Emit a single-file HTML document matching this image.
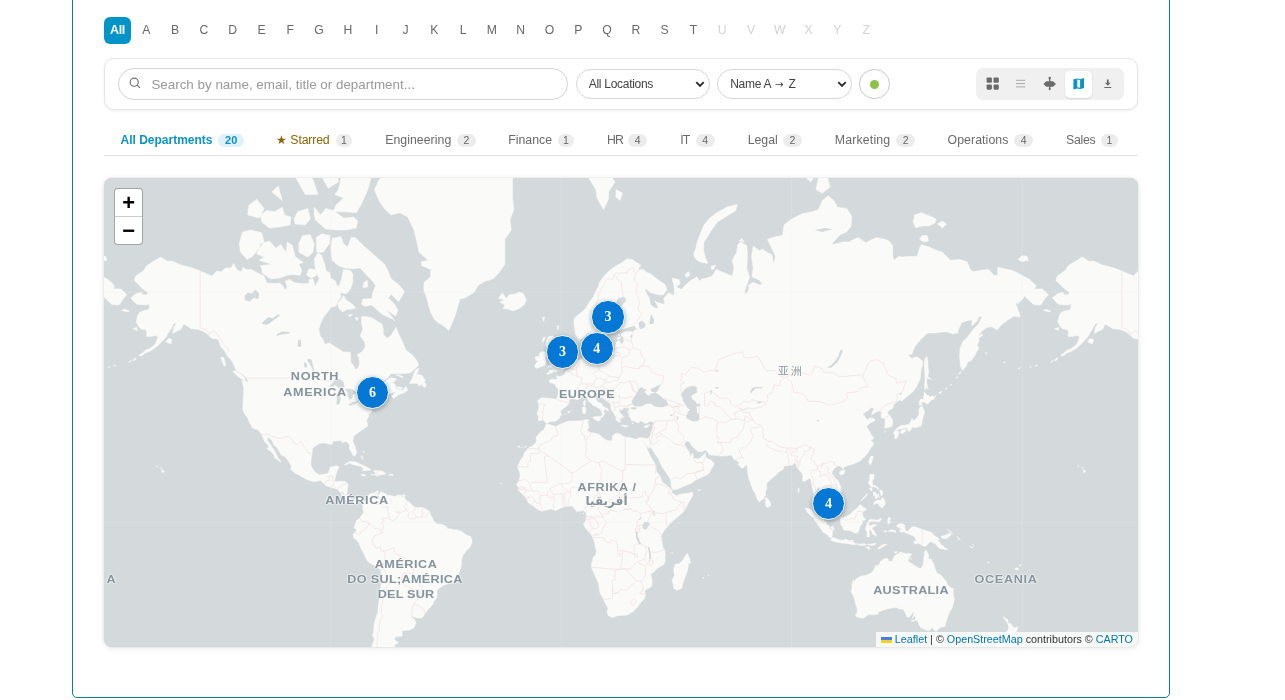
<!DOCTYPE html>
<html lang="en">
<head>
<meta charset="utf-8">
<title>Directory – Map</title>
<style>
*{box-sizing:border-box;margin:0;padding:0}
html,body{width:1285px;height:700px;overflow:hidden;background:#fff}
body{will-change:transform;font-family:"Liberation Sans",sans-serif;color:#444;position:relative}
.frame{position:absolute;left:72px;top:-40px;width:1098px;height:738px;border:1px solid #0e8088;border-radius:5px;background:#fff}
.alpha{position:absolute;left:104px;top:17px;height:27px;display:flex;gap:1.8px}
.alpha span{display:block;width:27px;height:27px;line-height:26px;text-align:center;font-size:12.2px;color:#686868;border-radius:6px}
.alpha span.on{background:#0294c8;color:#fff;font-weight:700;letter-spacing:-.4px;font-size:12.5px}
.alpha span.off{color:#d2d2d2}
.toolbar{position:absolute;left:104px;top:58px;width:1034px;height:52px;border:1px solid #e6e6e6;border-radius:10px;background:#fff;box-shadow:0 1px 3px rgba(0,0,0,.07)}
.search{position:absolute;left:118px;top:68px;width:450px;height:31.500px;border:1px solid #d4d4d4;border-radius:16px;background:#fff}
.search svg{position:absolute;left:9.500px;top:8.300px}
.search b{position:absolute;left:32.400px;top:0;line-height:31.600px;font-weight:400;font-size:13.4px;color:#9a9a9a;white-space:nowrap}
.sel{position:absolute;top:69px;height:29.500px;border:1px solid #d8d8d8;border-radius:15px;background:#fff;font-family:"Liberation Sans",sans-serif;font-size:12px;letter-spacing:-.28px;color:#444;line-height:29.600px;padding-left:12.200px;white-space:nowrap}
.sel svg{position:absolute;right:2.800px;top:7.500px}
.dotbtn{position:absolute;left:859px;top:69px;width:31px;height:29.500px;border:1px solid #c9c9c9;border-radius:15px;background:#fff}
.dotbtn i{position:absolute;left:10px;top:9.700px;width:9.300px;height:9.300px;border-radius:50%;background:#8bc34a}
.views{position:absolute;left:976px;top:68px;width:148px;height:32px;border-radius:7px;background:#f0f0f0}
.views .act{position:absolute;left:89px;top:3.200px;width:26.600px;height:26.600px;border-radius:5px;background:#fff;box-shadow:0 1px 2px rgba(0,0,0,.12)}
.views svg{position:absolute;top:0;left:0}
.tabs{position:absolute;left:104px;top:124px;width:1034px;height:32px;border-bottom:1px solid #e4e4e4}
.tabs a{position:absolute;top:0;height:31px;line-height:32px;font-size:12.3px;color:#6a6a6a;white-space:nowrap;text-decoration:none}
.tabs em{position:absolute;top:9.500px;height:13.200px;line-height:13.200px;border-radius:7px;background:#ececec;color:#666;font-style:normal;font-size:10.500px;text-align:center}
.tabs a.on{color:#0b93c6;font-weight:700;font-size:12px}
.tabs em.on{background:#dff1fb;color:#0b93c6;font-weight:700;font-size:11px}
.tabs a.star{color:#8a6500}
.map{position:absolute;left:104px;top:178px;width:1034px;height:469px;border-radius:8px;overflow:hidden;background:#d4dadc;box-shadow:0 1px 6px rgba(0,0,0,.10),0 0 0 1px rgba(0,0,0,.03)}
.map svg.world{position:absolute;left:0;top:0}
.zoom{position:absolute;left:10.300px;top:10.100px;width:28.900px;height:56.800px;border:1.200px solid rgba(0,0,0,.24);border-radius:4px;background:#fff;background-clip:padding-box;overflow:hidden}
.zoom span{display:block;height:27.400px;text-align:center;font:700 22px/27.800px "Liberation Sans",sans-serif;color:#000}
.zoom span+span{border-top:1px solid #ccc;height:27.400px;line-height:27.400px}
.attr{position:absolute;right:0;bottom:0;height:15.200px;line-height:15px;padding:0 5px 0 5px;background:rgba(255,255,255,.8);font-size:10.750px;color:#333;white-space:nowrap}
.attr a{color:#0078a8;text-decoration:none}
.attr svg{display:inline-block;vertical-align:-.5px;margin-right:3.200px}
.mk{position:absolute;width:33.400px;height:33.400px;margin:-16.700px 0 0 -16.700px;border-radius:50%;background:#0478d4;border:1.200px solid #fff;box-shadow:0 1.500px 4px rgba(0,0,0,.32);color:#fff;font:700 14px/32.400px "Liberation Serif",serif;text-align:center}
.lbl{position:absolute;font:700 11.2px/14px "Liberation Sans","DejaVu Sans","Noto Sans CJK SC",sans-serif;color:#85949f;text-align:center;white-space:nowrap;transform:translate(-50%,-50%) scaleX(1.13);text-shadow:0 0 1.5px #fafaf8,0 0 1.5px #fafaf8,0 0 2px #fafaf8}
.lbl.cjk{font-weight:400;font-size:11px;letter-spacing:2px;margin-left:1px;color:#8e99a1;transform:translate(-50%,-50%)}
.lbl.ar{font-family:"DejaVu Sans","Liberation Sans",sans-serif;letter-spacing:0;font-size:12px;transform:translate(-50%,-50%)}
</style>
</head>
<body>
<div class="frame"></div>
<div class="alpha"><span class="on">All</span><span>A</span><span>B</span><span>C</span><span>D</span><span>E</span><span>F</span><span>G</span><span>H</span><span>I</span><span>J</span><span>K</span><span>L</span><span>M</span><span>N</span><span>O</span><span>P</span><span>Q</span><span>R</span><span>S</span><span>T</span><span class="off">U</span><span class="off">V</span><span class="off">W</span><span class="off">X</span><span class="off">Y</span><span class="off">Z</span></div>
<div class="toolbar"></div>
<div class="search"><svg width="12" height="12" viewBox="0 0 12 12" fill="none" stroke="#6e6e6e" stroke-width="1.15"><circle cx="5.2" cy="5.2" r="4.05"/><path d="M8.2 8.2l2.7 2.7"/></svg><b>Search by name, email, title or department...</b></div>
<div class="sel" style="left:575.500px;width:134.500px">All Locations<svg width="12" height="12" viewBox="0 0 12 12" fill="none" stroke="#2a2a2a" stroke-width="1.9"><path d="M2.300 4.200l3.700 3.700 3.700-3.700"/></svg></div>
<div class="sel" style="left:717px;width:135px">Name A <span style="font-family:'DejaVu Sans',sans-serif;font-size:10.500px;letter-spacing:0;position:relative;top:-.5px;margin:0 1.5px">→</span> Z<svg width="12" height="12" viewBox="0 0 12 12" fill="none" stroke="#2a2a2a" stroke-width="1.9"><path d="M2.300 4.200l3.700 3.700 3.700-3.700"/></svg></div>
<div class="dotbtn"><i></i></div>
<div class="views"><div class="act"></div>
<svg width="148" height="32" viewBox="0 0 148 32">
<g fill="#6b6b6b"><rect x="10.600" y="9.500" width="5.300" height="5.300" rx="1.100"/><rect x="17.500" y="9.500" width="5.300" height="5.300" rx="1.100"/><rect x="10.600" y="16.400" width="5.300" height="5.300" rx="1.100"/><rect x="17.500" y="16.400" width="5.300" height="5.300" rx="1.100"/></g>
<g stroke="#a9a9a9" stroke-width="1"><path d="M40 12.300h9.200M40 15.600h9.200M40 18.900h9.200"/></g>
<g fill="#6b6b6b"><path d="M67.400 15.900l3-2.700h6.600l3 2.700-3 2.800h-6.600z"/><rect x="73" y="10.500" width="1.400" height="11" /><circle cx="73.700" cy="9.900" r="1.200"/><path d="M72.300 20.500h2.800l-1.400 2.100z"/></g>
<g><path fill="#0b93c6" d="M97.400 11.600l3.800-1 3.200.6 3.600-1.100v9.800l-3.600 1.100-3.200-.6-3.800 1z"/><path fill="#fff" d="M101.300 11.600l2.800.5v7.600l-2.800-.5z"/></g>
<g fill="#6b6b6b"><path d="M130.900 11.500h1.800v3.200h2l-2.900 3.100-2.900-3.100h2zM128.300 18.900h7v1.100h-7z"/></g>
</svg></div>
<div class="tabs">
<a class="on" style="left:16.5px;letter-spacing:0.00px">All Departments</a><em class="on" style="left:114.3px;width:25.7px">20</em>
<a class="star" style="left:172.3px;letter-spacing:-0.17px">★ Starred</a><em class="star" style="left:232.2px;width:15.6px">1</em>
<a class="" style="left:281.2px;letter-spacing:0.04px">Engineering</a><em class="" style="left:353.0px;width:18.8px">2</em>
<a class="" style="left:404.2px;letter-spacing:0.02px">Finance</a><em class="" style="left:453.8px;width:16.2px">1</em>
<a class="" style="left:503.1px;letter-spacing:-0.90px">HR</a><em class="" style="left:523.9px;width:19.6px">4</em>
<a class="" style="left:576.3px;letter-spacing:-0.90px">IT</a><em class="" style="left:591.7px;width:19.2px">4</em>
<a class="" style="left:643.7px;letter-spacing:-0.02px">Legal</a><em class="" style="left:679.1px;width:18.8px">2</em>
<a class="" style="left:730.8px;letter-spacing:0.17px">Marketing</a><em class="" style="left:792.3px;width:18.6px">2</em>
<a class="" style="left:843.5px;letter-spacing:0.08px">Operations</a><em class="" style="left:910.1px;width:19.0px">4</em>
<a class="" style="left:962.0px;letter-spacing:-0.27px">Sales</a><em class="" style="left:997.2px;width:16.6px">1</em>
</div>
<div class="map">
<svg class="world" width="1034" height="469" viewBox="0 0 1034 469"><rect width="1034" height="469" fill="#d4dadc"/><path fill="#fafaf8" stroke="#fafaf8" stroke-width=".45" stroke-linejoin="round" d="M26.9,119.9L31.5,116.1L37.4,114.2L38.1,116.7L43.0,116.7L43.8,114.2L38.1,110.3L30.2,102.2L31.7,98.0L39.9,92.2L42.7,87.7L48.9,83.8L56.6,79.1L63.0,83.1L68.1,83.1L77.0,86.9L88.6,90.0L96.2,92.9L102.6,95.8L107.8,98.0L112.9,92.9L116.7,93.7L121.8,90.0L127.0,90.0L129.5,85.4L133.4,92.2L137.2,93.7L139.0,89.2L142.3,91.4L147.4,91.4L155.1,95.8L160.2,98.0L162.8,104.9L170.5,105.6L175.6,104.9L179.4,108.3L180.7,112.2L183.3,109.0L181.2,102.9L185.8,101.5L189.7,104.3L196.1,105.6L201.2,105.6L205.0,105.6L205.0,101.5L208.9,100.8L211.4,108.3L213.2,104.3L215.3,100.8L212.7,95.1L210.7,87.7L210.4,80.7L214.0,75.0L217.3,76.7L220.4,85.4L222.4,92.9L225.5,94.4L226.8,100.1L231.2,102.9L233.2,108.3L235.8,107.0L237.8,99.4L239.6,91.4L246.0,92.2L248.8,95.8L248.8,104.3L246.5,110.9L242.9,115.5L239.6,115.5L236.3,114.2L237.0,119.2L233.7,123.5L232.4,127.7L226.8,129.5L224.8,132.4L221.7,136.3L218.4,141.3L216.6,145.6L214.8,151.3L216.0,157.4L219.6,162.2L220.7,166.0L225.5,165.1L230.6,168.4L234.5,170.7L239.6,173.9L246.5,174.3L246.8,183.9L249.8,188.1L251.1,191.4L254.2,190.2L255.5,186.0L255.0,179.6L253.2,177.0L258.8,173.0L261.4,168.4L260.6,163.7L256.2,157.9L258.8,151.3L257.5,146.1L257.5,138.6L262.6,138.6L267.8,139.7L272.9,142.9L278.0,146.1L279.3,151.3L279.3,156.4L283.1,160.3L287.0,157.4L290.0,152.4L292.1,149.3L295.4,157.4L299.2,165.1L301.8,172.0L307.4,176.1L310.5,179.6L313.8,183.9L314.6,187.3L311.3,190.6L306.2,195.1L298.5,195.5L287.2,195.5L284.4,199.0L280.6,202.5L277.2,206.3L275.4,208.6L278.8,205.6L283.1,201.8L287.0,199.8L292.6,201.0L290.0,204.1L287.5,204.1L291.3,206.7L291.8,210.5L294.4,211.9L298.7,212.3L301.8,208.2L303.9,211.9L301.0,214.5L294.6,216.7L289.5,220.6L287.7,218.1L292.1,214.1L288.2,214.5L285.7,215.9L280.6,218.8L277.5,220.2L276.0,224.4L278.0,226.5L274.2,227.9L269.0,229.2L267.8,230.6L267.8,233.6L265.5,236.2L263.9,234.6L264.9,237.6L263.7,240.5L262.6,242.4L263.4,245.9L263.9,248.1L261.4,249.7L257.8,252.2L255.0,254.0L252.7,255.8L249.8,258.0L248.8,263.0L250.1,266.3L251.1,268.3L252.4,273.5L252.1,276.1L251.1,277.8L249.3,277.8L247.8,275.2L246.8,273.0L245.2,270.4L245.5,266.9L243.4,264.2L241.6,263.6L238.8,264.8L236.5,262.7L234.0,262.7L231.9,263.0L228.6,263.0L228.3,266.3L225.5,266.3L223.0,265.4L219.1,264.8L214.5,266.0L210.9,268.3L208.4,270.4L208.1,275.8L207.1,281.2L206.8,285.9L208.1,290.0L211.2,294.4L214.0,296.0L215.5,297.1L220.4,296.0L223.0,296.0L225.5,292.5L225.8,289.5L227.6,288.7L231.9,287.8L234.2,288.1L235.0,289.2L233.2,292.8L231.9,296.3L231.4,299.0L230.4,303.3L233.2,303.5L237.0,303.3L240.9,303.5L244.2,305.7L243.4,310.9L242.9,314.9L243.2,316.4L244.7,318.8L246.8,321.4L249.8,321.9L252.4,320.8L253.7,319.8L256.2,320.3L258.8,322.1L260.6,324.0L259.1,324.2L257.8,326.0L256.5,323.2L253.7,321.4L252.4,323.4L252.4,325.2L250.1,326.0L248.0,324.0L245.0,323.4L242.9,322.7L240.4,319.8L239.3,319.8L237.6,318.2L237.8,315.9L235.0,313.0L233.2,310.9L229.4,310.1L224.2,308.6L221.2,307.0L216.6,302.5L214.0,303.0L210.2,303.8L206.3,302.7L201.5,300.9L196.1,297.6L190.2,294.7L186.6,291.1L187.6,288.9L184.8,283.4L180.7,278.4L177.1,276.7L173.3,270.1L170.0,266.9L167.9,262.4L163.6,258.9L163.6,262.4L166.6,266.9L169.2,270.7L171.8,275.0L174.3,280.3L176.9,283.4L175.9,284.2L174.8,282.6L170.5,279.5L170.0,277.0L166.6,273.2L162.8,270.4L164.8,269.2L164.1,266.9L161.0,263.9L158.4,258.6L157.2,255.8L154.1,251.9L148.7,250.3L145.1,243.7L143.6,239.8L140.5,235.9L138.7,231.3L139.2,222.3L139.8,210.8L138.0,202.5L142.3,203.3L143.6,206.7L143.6,202.1L141.8,199.0L138.5,196.3L132.1,192.2L130.0,187.3L127.0,181.8L123.6,178.3L120.6,173.0L116.7,168.4L114.2,161.3L107.8,160.3L103.9,156.4L99.6,153.4L93.7,151.3L87.3,150.8L84.2,148.8L79.6,146.1L77.0,151.3L74.2,152.4L68.6,155.4L69.9,148.8L73.2,145.1L69.4,146.1L66.8,151.3L64.2,154.9L62.4,158.8L56.6,165.1L51.4,169.8L46.3,173.0L41.2,175.2L35.3,177.4L41.2,172.5L46.3,170.2L51.4,166.0L54.0,158.8L51.4,157.4L47.6,158.4L42.2,158.4L43.0,153.9L41.2,151.3L37.4,151.3L34.3,148.2L32.2,143.5L33.5,138.0L35.3,134.7L39.9,132.4L45.0,131.8L45.6,125.9L42.5,127.1L33.8,126.5L31.0,124.7ZM948.5,119.9L953.1,116.1L959.0,114.2L959.7,116.7L964.6,116.7L965.4,114.2L959.7,110.3L951.8,102.2L953.3,98.0L961.5,92.2L964.3,87.7L970.5,83.8L978.2,79.1L984.6,83.1L989.7,83.1L998.6,86.9L1010.2,90.0L1017.8,92.9L1024.2,95.8L1029.4,98.0L1034.5,92.9L1038.3,93.7L1043.4,90.0L1048.6,90.0L1051.1,85.4L1055.0,92.2L1058.8,93.7L1060.6,89.2L1063.9,91.4L1069.0,91.4L1076.7,95.8L1081.8,98.0L1084.4,104.9L1092.1,105.6L1097.2,104.9L1101.0,108.3L1102.3,112.2L1104.9,109.0L1102.8,102.9L1107.4,101.5L1111.3,104.3L1117.7,105.6L1122.8,105.6L1126.6,105.6L1126.6,101.5L1130.5,100.8L1133.0,108.3L1134.8,104.3L1136.9,100.8L1134.3,95.1L1132.3,87.7L1132.0,80.7L1135.6,75.0L1138.9,76.7L1142.0,85.4L1144.0,92.9L1147.1,94.4L1148.4,100.1L1152.8,102.9L1154.8,108.3L1157.4,107.0L1159.4,99.4L1161.2,91.4L1167.6,92.2L1170.4,95.8L1170.4,104.3L1168.1,110.9L1164.5,115.5L1161.2,115.5L1157.9,114.2L1158.6,119.2L1155.3,123.5L1154.0,127.7L1148.4,129.5L1146.4,132.4L1143.3,136.3L1140.0,141.3L1138.2,145.6L1136.4,151.3L1137.6,157.4L1141.2,162.2L1142.3,166.0L1147.1,165.1L1152.2,168.4L1156.1,170.7L1161.2,173.9L1168.1,174.3L1168.4,183.9L1171.4,188.1L1172.7,191.4L1175.8,190.2L1177.1,186.0L1176.6,179.6L1174.8,177.0L1180.4,173.0L1183.0,168.4L1182.2,163.7L1177.8,157.9L1180.4,151.3L1179.1,146.1L1179.1,138.6L1184.2,138.6L1189.4,139.7L1194.5,142.9L1199.6,146.1L1200.9,151.3L1200.9,156.4L1204.7,160.3L1208.6,157.4L1211.6,152.4L1213.7,149.3L1217.0,157.4L1220.8,165.1L1223.4,172.0L1229.0,176.1L1232.1,179.6L1235.4,183.9L1236.2,187.3L1232.9,190.6L1227.8,195.1L1220.1,195.5L1208.8,195.5L1206.0,199.0L1202.2,202.5L1198.8,206.3L1197.0,208.6L1200.4,205.6L1204.7,201.8L1208.6,199.8L1214.2,201.0L1211.6,204.1L1209.1,204.1L1212.9,206.7L1213.4,210.5L1216.0,211.9L1220.3,212.3L1223.4,208.2L1225.5,211.9L1222.6,214.5L1216.2,216.7L1211.1,220.6L1209.3,218.1L1213.7,214.1L1209.8,214.5L1207.3,215.9L1202.2,218.8L1199.1,220.2L1197.6,224.4L1199.6,226.5L1195.8,227.9L1190.6,229.2L1189.4,230.6L1189.4,233.6L1187.1,236.2L1185.5,234.6L1186.5,237.6L1185.3,240.5L1184.2,242.4L1185.0,245.9L1185.5,248.1L1183.0,249.7L1179.4,252.2L1176.6,254.0L1174.3,255.8L1171.4,258.0L1170.4,263.0L1171.7,266.3L1172.7,268.3L1174.0,273.5L1173.7,276.1L1172.7,277.8L1170.9,277.8L1169.4,275.2L1168.4,273.0L1166.8,270.4L1167.1,266.9L1165.0,264.2L1163.2,263.6L1160.4,264.8L1158.1,262.7L1155.6,262.7L1153.5,263.0L1150.2,263.0L1149.9,266.3L1147.1,266.3L1144.6,265.4L1140.7,264.8L1136.1,266.0L1132.5,268.3L1130.0,270.4L1129.7,275.8L1128.7,281.2L1128.4,285.9L1129.7,290.0L1132.8,294.4L1135.6,296.0L1137.1,297.1L1142.0,296.0L1144.6,296.0L1147.1,292.5L1147.4,289.5L1149.2,288.7L1153.5,287.8L1155.8,288.1L1156.6,289.2L1154.8,292.8L1153.5,296.3L1153.0,299.0L1152.0,303.3L1154.8,303.5L1158.6,303.3L1162.5,303.5L1165.8,305.7L1165.0,310.9L1164.5,314.9L1164.8,316.4L1166.3,318.8L1168.4,321.4L1171.4,321.9L1174.0,320.8L1175.3,319.8L1177.8,320.3L1180.4,322.1L1182.2,324.0L1180.7,324.2L1179.4,326.0L1178.1,323.2L1175.3,321.4L1174.0,323.4L1174.0,325.2L1171.7,326.0L1169.6,324.0L1166.6,323.4L1164.5,322.7L1162.0,319.8L1160.9,319.8L1159.2,318.2L1159.4,315.9L1156.6,313.0L1154.8,310.9L1151.0,310.1L1145.8,308.6L1142.8,307.0L1138.2,302.5L1135.6,303.0L1131.8,303.8L1127.9,302.7L1123.1,300.9L1117.7,297.6L1111.8,294.7L1108.2,291.1L1109.2,288.9L1106.4,283.4L1102.3,278.4L1098.7,276.7L1094.9,270.1L1091.6,266.9L1089.5,262.4L1085.2,258.9L1085.2,262.4L1088.2,266.9L1090.8,270.7L1093.4,275.0L1095.9,280.3L1098.5,283.4L1097.5,284.2L1096.4,282.6L1092.1,279.5L1091.6,277.0L1088.2,273.2L1084.4,270.4L1086.4,269.2L1085.7,266.9L1082.6,263.9L1080.0,258.6L1078.8,255.8L1075.7,251.9L1070.3,250.3L1066.7,243.7L1065.2,239.8L1062.1,235.9L1060.3,231.3L1060.8,222.3L1061.4,210.8L1059.6,202.5L1063.9,203.3L1065.2,206.7L1065.2,202.1L1063.4,199.0L1060.1,196.3L1053.7,192.2L1051.6,187.3L1048.6,181.8L1045.2,178.3L1042.2,173.0L1038.3,168.4L1035.8,161.3L1029.4,160.3L1025.5,156.4L1021.2,153.4L1015.3,151.3L1008.9,150.8L1005.8,148.8L1001.2,146.1L998.6,151.3L995.8,152.4L990.2,155.4L991.5,148.8L994.8,145.1L991.0,146.1L988.4,151.3L985.8,154.9L984.0,158.8L978.2,165.1L973.0,169.8L967.9,173.0L962.8,175.2L956.9,177.4L962.8,172.5L967.9,170.2L973.0,166.0L975.6,158.8L973.0,157.4L969.2,158.4L963.8,158.4L964.6,153.9L962.8,151.3L959.0,151.3L955.9,148.2L953.8,143.5L955.1,138.0L956.9,134.7L961.5,132.4L966.6,131.8L967.2,125.9L964.1,127.1L955.4,126.5L952.6,124.7ZM344.8,152.4L339.4,147.7L333.0,144.0L330.0,140.8L326.6,134.1L324.8,128.3L322.8,120.5L319.7,111.6L320.2,104.3L326.6,98.7L326.6,91.4L317.7,87.7L317.2,83.8L324.1,82.3L315.1,74.2L313.6,67.4L310.0,52.0L303.6,39.0L295.9,34.7L287.0,36.9L281.1,31.5L275.4,23.6L270.3,11.6L275.4,1.2L288.2,-5.6L293.4,-12.8L285.7,-23.5L298.5,-36.8L316.4,-51.3L342.0,-61.2L372.7,-78.5L393.2,-65.3L406.0,-45.7L426.5,-35.1L416.2,-12.8L408.6,1.2L408.6,20.1L409.8,31.5L406.0,42.1L407.3,52.0L400.9,61.3L400.9,74.2L400.9,86.2L395.8,93.7L389.4,100.8L380.4,103.6L374.0,107.6L370.2,114.2L360.9,119.9L356.1,121.1L353.5,129.5L351.0,138.0L347.6,146.1ZM394.5,120.5L398.3,114.8L402.2,120.5L405.2,116.7L411.1,116.1L415.0,114.2L419.3,115.5L422.4,121.7L420.1,127.1L415.0,130.6L409.3,133.0L404.7,131.2L399.1,130.6L400.9,127.1L395.8,124.1L400.9,121.7ZM290.8,142.9L288.2,140.8L281.8,138.0L278.0,136.3L272.9,131.8L267.8,127.1L261.4,128.3L257.5,126.5L258.8,121.1L267.8,120.5L269.0,114.2L271.6,107.6L267.8,102.2L262.6,97.3L256.2,90.0L248.6,90.7L240.9,90.0L234.5,87.7L228.1,82.3L226.8,70.0L228.1,60.4L237.0,58.5L239.6,65.7L243.4,69.2L247.3,59.4L251.1,59.4L260.1,68.3L265.2,72.5L274.2,80.7L280.6,86.2L284.4,93.7L287.0,100.8L293.4,105.6L298.5,110.9L300.3,113.5L298.5,117.4L294.6,123.5L287.0,116.1L284.4,119.9L290.8,126.5L294.1,132.4L291.6,138.0L285.7,134.1L281.8,131.2L288.2,139.1ZM166.1,100.8L175.6,100.1L183.3,97.3L188.4,96.5L196.1,97.3L197.9,92.2L194.8,86.2L199.2,84.6L191.0,78.3L188.4,67.4L183.3,63.9L182.0,74.2L176.9,66.6L171.8,70.0L165.4,63.0L156.4,65.7L152.6,75.9L160.2,79.1L155.1,82.3L167.9,86.2L156.4,87.7L157.7,90.7L158.2,95.1L161.5,97.3ZM143.1,81.5L136.4,74.2L135.2,65.7L138.5,53.9L147.4,52.0L157.7,54.8L160.2,63.9L153.8,71.7L148.7,78.3ZM157.7,44.1L165.4,50.0L175.6,49.1L185.8,47.1L187.1,39.0L180.7,36.9L178.2,29.3L170.5,33.7L162.8,32.6L156.4,36.9ZM143.6,36.9L155.1,40.0L160.2,30.4L152.6,21.3L144.9,27.0ZM191.0,46.1L201.2,47.1L206.3,41.0L203.8,30.4L193.5,33.7L190.2,41.0ZM194.8,74.2L203.8,79.1L208.9,74.2L210.2,65.7L206.3,56.7L198.6,57.6L194.8,65.7ZM212.7,74.2L219.1,74.2L225.5,65.7L226.0,57.6L217.8,55.8L212.2,59.4ZM202.5,97.3L207.6,100.1L212.7,97.3L211.4,91.4L205.0,90.7ZM211.4,42.1L221.7,51.0L231.9,52.0L242.2,52.0L252.4,50.0L253.7,43.1L249.8,39.0L239.6,40.0L229.4,32.6L221.7,30.4L216.6,36.9L210.2,29.3L210.2,36.9ZM229.4,33.7L239.6,33.7L252.4,34.7L257.5,25.9L263.9,11.6L267.8,-2.9L283.1,-20.4L298.5,-45.7L278.0,-65.3L239.6,-51.3L221.7,-33.4L231.9,-15.8L238.3,-5.6L234.5,11.6L230.6,16.5L239.6,20.1L231.9,27.0ZM211.4,-12.8L224.2,10.3L234.5,3.9L231.9,-17.3L219.1,-31.7ZM191.0,-1.5L201.2,16.5L214.0,16.5L208.9,1.2L198.6,-5.6ZM167.9,14.1L178.2,22.4L174.3,7.8ZM234.5,129.5L238.3,134.1L243.4,131.2L247.3,131.2L251.9,130.1L248.6,126.5L242.2,121.7L239.6,117.4L237.0,121.7L233.7,124.7ZM244.2,136.9L248.6,136.3L246.0,139.1ZM251.1,139.7L254.2,139.7L252.9,142.9ZM258.8,109.6L263.9,109.0L263.2,102.2L260.1,104.3ZM305.4,205.6L308.2,200.2L309.5,196.3L311.3,192.2L314.9,189.8L313.8,194.3L312.0,197.1L315.1,196.3L319.0,198.2L320.2,201.8L321.5,201.4L320.2,204.8L322.3,206.0L321.3,209.3L319.0,208.6L318.4,206.0L315.1,208.2L313.8,205.6L310.0,205.6ZM292.1,196.7L298.5,199.8L299.2,199.0L294.6,196.7ZM292.6,208.6L298.5,209.7L297.2,211.6L293.4,210.5ZM128.8,193.4L134.6,199.0L141.0,202.9L141.0,200.2L136.4,195.5L130.8,192.6ZM116.7,179.2L120.0,188.1L121.8,187.3L119.8,179.6ZM61.7,163.7L66.8,166.0L68.1,161.8L64.8,160.3ZM983.3,163.7L988.4,166.0L989.7,161.8L986.4,160.3ZM28.9,150.8L33.0,152.4L32.8,149.3ZM950.5,150.8L954.6,152.4L954.4,149.3ZM17.6,132.4L24.6,134.1L25.1,133.0L20.7,131.2ZM939.2,132.4L946.2,134.1L946.7,133.0L942.3,131.2ZM239.9,287.0L244.7,284.0L246.3,283.4L251.1,283.7L255.0,285.6L258.8,287.3L262.6,288.9L267.2,291.7L263.9,292.5L258.3,292.8L259.6,290.6L256.2,288.1L252.4,287.6L248.6,286.5L246.0,285.1L243.4,286.2ZM266.5,296.6L271.9,296.3L270.8,294.1L269.3,292.8L273.6,292.5L278.0,293.0L279.8,294.1L282.1,296.0L278.3,296.6L275.4,297.1L273.6,298.4L271.6,297.1ZM256.8,296.8L260.1,296.3L262.1,297.6L259.6,298.2ZM285.2,296.3L289.3,296.6L288.8,297.6L285.2,297.6ZM257.0,277.8L258.3,281.2L259.1,280.6L257.8,277.8ZM258.8,273.0L260.1,274.7L260.3,273.8ZM298.7,316.9L301.3,316.7L301.0,318.5L298.7,318.5ZM260.6,324.0L263.9,317.7L265.7,316.2L267.2,315.4L270.6,314.9L273.9,312.5L274.7,314.1L273.1,315.6L273.9,316.9L275.4,316.2L277.5,313.3L278.5,314.9L281.8,315.6L283.1,317.5L285.7,317.2L290.8,318.5L292.8,317.5L298.5,316.9L297.2,318.2L301.0,320.1L302.3,322.7L304.1,323.2L308.2,327.1L311.3,329.4L315.9,329.4L319.0,329.6L323.3,331.9L325.4,333.2L326.6,336.8L328.4,339.9L329.2,342.5L331.8,345.0L333.6,346.0L336.1,346.0L339.4,347.1L342.0,348.3L343.8,350.9L345.8,350.6L350.2,351.9L353.5,351.7L358.6,354.0L361.7,356.5L363.8,357.6L366.8,358.6L368.1,362.7L367.9,365.3L365.8,369.5L362.5,372.6L358.6,378.1L357.4,382.8L357.4,387.3L356.8,390.6L355.6,392.7L354.0,397.6L352.2,402.3L349.7,405.0L346.6,405.0L342.8,405.9L338.7,407.8L335.6,410.1L333.0,412.0L333.0,418.1L332.3,421.0L330.0,423.0L328.4,426.6L326.1,429.5L323.8,431.6L320.5,436.2L319.5,438.4L316.7,440.3L313.3,439.9L309.2,438.7L307.7,437.1L307.7,439.0L310.8,441.8L312.0,444.4L310.0,449.8L306.2,452.1L298.0,452.8L298.2,458.1L290.8,459.1L290.8,461.5L294.4,464.9L290.8,466.7L290.0,472.0L287.0,474.1L284.4,477.4L288.8,481.9L284.4,490.0L280.6,496.8L282.1,502.1L275.4,508.5L267.8,500.9L263.9,484.9L266.5,477.4L269.0,473.8L267.8,468.4L270.3,461.5L268.3,456.4L269.3,455.7L270.1,445.9L271.3,441.8L273.9,434.1L274.2,428.0L274.7,424.8L276.0,416.6L277.0,406.7L277.5,397.3L277.2,392.7L274.7,390.3L271.1,387.9L267.8,386.0L264.7,384.4L261.9,380.4L259.8,375.4L257.5,371.5L256.0,367.9L255.0,365.3L252.7,362.2L249.6,360.1L249.1,356.5L251.6,353.2L252.7,351.2L250.1,350.1L250.6,347.1L252.1,344.5L252.4,342.5L255.5,340.4L257.0,338.1L259.6,334.8L258.8,330.4L259.1,327.6L257.8,326.0L259.1,324.2ZM35.1,177.0L39.2,175.6L39.4,177.0L36.1,177.9ZM956.7,177.0L960.8,175.6L961.0,177.0L957.7,177.9ZM29.2,182.2L31.5,179.6L32.0,180.9L29.9,183.1ZM950.8,182.2L953.1,179.6L953.6,180.9L951.5,183.1ZM24.6,184.8L27.6,181.8L27.4,183.1ZM946.2,184.8L949.2,181.8L949.0,183.1ZM9.2,188.1L11.8,186.9L11.5,187.9ZM930.8,188.1L933.4,186.9L933.1,187.9ZM4.1,189.4L5.6,188.3L5.4,189.6ZM925.7,189.4L927.2,188.3L927.0,189.6ZM899.3,184.3L901.4,183.9L900.6,185.0ZM914.2,190.6L916.2,189.6L915.4,190.8ZM-478.7,245.6L-480.5,244.0L-482.3,241.8L-484.6,242.4L-487.4,242.4L-486.9,237.9L-488.7,236.6L-487.2,231.9L-486.7,228.6L-487.2,225.1L-488.2,222.7L-485.9,220.9L-484.1,219.5L-479.0,220.2L-474.1,220.6L-469.5,221.3L-468.5,220.6L-467.5,216.3L-467.2,213.0L-467.5,210.8L-469.8,208.6L-470.0,206.7L-473.1,205.2L-475.7,204.8L-476.7,202.5L-473.4,201.0L-469.5,201.8L-468.5,201.8L-469.0,197.4L-467.2,198.6L-464.1,198.2L-461.6,196.7L-459.5,192.2L-457.0,191.4L-454.2,188.1L-452.4,183.9L-450.3,182.2L-446.7,182.2L-443.9,180.9L-442.1,180.0L-441.6,178.3L-442.4,175.6L-443.2,173.0L-443.7,168.4L-443.2,165.6L-440.1,165.1L-437.3,162.7L-437.5,166.0L-438.0,169.8L-439.3,173.0L-440.1,176.1L-438.3,177.9L-436.5,179.6L-433.4,178.7L-429.8,177.0L-427.8,180.0L-424.5,178.7L-420.9,176.5L-416.5,177.9L-413.5,177.0L-413.2,175.2L-410.4,172.0L-410.6,168.4L-409.4,164.2L-406.5,162.2L-405.0,165.6L-402.7,166.0L-401.9,162.2L-401.7,159.3L-404.2,157.9L-404.2,155.4L-400.9,153.9L-396.6,153.4L-392.7,153.9L-390.2,151.8L-387.1,151.8L-389.6,150.3L-390.9,147.7L-395.3,148.8L-400.4,150.3L-405.5,152.4L-407.6,149.3L-409.9,146.1L-409.6,140.8L-409.1,134.7L-405.8,130.6L-401.7,125.3L-399.4,123.5L-399.9,119.9L-402.4,118.6L-407.6,119.9L-410.1,125.3L-412.4,130.6L-416.5,135.2L-419.9,138.6L-420.4,147.7L-417.0,149.8L-416.0,154.4L-420.9,157.9L-421.6,162.2L-422.4,167.4L-424.5,169.8L-427.8,172.5L-430.6,173.4L-431.6,170.7L-431.4,167.4L-433.9,162.7L-435.7,156.9L-437.0,153.4L-438.8,156.4L-443.9,160.8L-446.5,161.3L-450.1,156.4L-451.1,149.3L-451.6,146.1L-451.6,140.8L-448.8,138.0L-444.7,134.7L-440.1,130.6L-436.2,124.1L-433.2,120.5L-431.1,116.1L-427.5,109.0L-426.0,104.3L-422.2,98.7L-415.8,92.2L-410.6,88.4L-403.7,84.6L-398.4,80.7L-393.5,81.5L-388.9,84.6L-384.8,86.9L-387.6,91.4L-382.5,91.4L-378.6,94.4L-374.8,95.8L-367.1,102.2L-360.7,106.3L-358.7,111.6L-362.0,116.7L-367.1,116.7L-374.8,114.8L-380.4,110.3L-379.9,114.2L-376.1,120.5L-375.3,126.5L-371.0,130.1L-367.1,130.1L-368.4,127.1L-371.0,122.9L-367.1,124.7L-362.8,125.9L-360.7,125.9L-362.0,120.5L-356.9,114.8L-351.8,117.4L-351.2,114.2L-351.8,107.6L-353.6,100.1L-346.6,101.5L-345.4,105.6L-349.2,109.0L-344.1,111.6L-340.2,107.0L-336.4,103.6L-328.7,98.7L-326.2,102.9L-323.6,100.8L-318.5,100.1L-313.4,98.0L-309.3,91.4L-300.6,95.1L-293.4,98.0L-291.6,90.0L-293.4,82.3L-289.0,74.2L-287.8,66.6L-285.2,63.9L-278.8,67.4L-278.0,78.3L-278.8,90.0L-276.0,99.4L-279.6,109.0L-281.4,114.8L-278.8,115.5L-276.8,111.6L-276.8,107.0L-272.4,104.3L-266.0,107.0L-263.4,106.3L-266.0,102.2L-273.7,98.7L-272.4,90.0L-274.2,78.3L-272.4,68.3L-266.0,72.5L-263.4,70.9L-258.3,74.2L-253.7,76.7L-251.9,86.2L-250.1,78.3L-258.3,61.3L-249.4,58.5L-243.0,57.6L-241.7,47.1L-234.0,41.0L-223.8,35.8L-213.5,33.7L-207.1,31.5L-203.3,22.4L-197.4,17.7L-191.8,22.4L-187.9,29.3L-179.0,30.4L-173.8,37.9L-174.4,48.1L-179.0,53.9L-185.4,56.7L-190.5,62.2L-194.3,66.6L-189.2,65.7L-182.8,63.9L-176.4,63.9L-173.8,62.2L-167.4,59.4L-159.8,64.8L-149.5,59.4L-140.6,61.3L-136.7,63.0L-132.9,67.4L-132.9,78.3L-131.6,82.3L-126.5,78.3L-123.9,79.1L-116.2,78.3L-108.6,78.3L-106.0,70.0L-104.2,66.6L-95.8,69.2L-90.6,71.7L-83.0,74.2L-75.3,82.3L-65.0,81.5L-58.6,83.8L-54.8,92.2L-52.2,93.7L-44.6,92.2L-36.9,91.4L-31.8,97.3L-27.9,97.3L-27.9,89.2L-21.5,90.7L-13.8,92.2L-8.7,94.4L-2.3,98.0L4.1,101.5L10.5,107.6L9.2,110.9L16.9,110.9L22.8,116.7L19.4,120.5L15.6,126.5L13.8,127.1L7.9,126.5L1.5,120.5L-1.0,117.4L-2.3,120.5L-7.4,125.3L-10.0,125.3L-6.2,135.2L-5.4,139.1L-11.3,138.0L-17.7,141.9L-24.1,146.7L-28.4,151.8L-34.3,148.8L-39.4,149.8L-42.0,151.8L-45.8,155.4L-47.1,161.3L-46.4,162.2L-48.4,167.4L-46.6,169.8L-49.7,175.2L-50.2,177.0L-54.8,183.1L-58.1,183.9L-59.2,188.1L-63.2,192.6L-65.0,188.1L-66.1,179.6L-65.6,170.7L-63.0,163.7L-59.2,160.3L-52.2,151.3L-47.1,146.1L-43.3,138.0L-47.1,139.1L-48.4,142.9L-54.0,148.2L-53.5,141.9L-57.4,142.4L-63.8,144.5L-67.6,152.4L-67.6,154.9L-72.7,155.9L-78.4,153.9L-83.0,153.9L-90.6,154.9L-97.8,154.9L-104.7,161.3L-110.6,168.4L-113.7,176.1L-117.5,177.0L-113.7,180.5L-108.6,178.7L-104.7,181.8L-102.7,183.1L-103.4,188.1L-104.5,192.2L-105.2,200.2L-108.6,207.9L-112.4,213.4L-117.5,217.7L-123.9,223.0L-126.5,222.0L-129.8,224.8L-132.1,226.5L-132.4,229.9L-137.7,233.3L-138.3,235.3L-135.7,237.2L-133.1,242.4L-132.9,245.6L-133.9,248.4L-137.5,249.7L-141.1,250.0L-140.6,245.6L-140.3,240.8L-144.4,239.5L-144.7,237.6L-143.9,233.9L-146.2,232.9L-149.5,233.9L-154.1,236.9L-152.1,231.3L-151.6,229.9L-154.6,229.6L-158.2,232.9L-162.8,235.9L-160.0,239.8L-158.5,242.1L-155.4,239.8L-150.8,241.1L-150.8,242.7L-156.4,245.6L-159.0,248.7L-155.9,253.4L-154.6,256.4L-152.3,258.9L-152.3,261.0L-155.2,263.0L-152.3,264.2L-152.3,266.9L-154.6,269.8L-158.2,275.5L-162.1,279.8L-165.6,283.1L-172.0,285.9L-173.8,286.5L-178.2,287.8L-181.8,288.9L-182.3,291.4L-183.6,289.8L-185.1,288.1L-187.9,288.1L-191.0,290.0L-193.3,293.6L-193.6,295.8L-191.8,298.4L-188.9,301.7L-187.4,302.7L-184.8,308.8L-184.8,313.8L-187.7,316.4L-190.2,318.0L-191.2,320.1L-196.1,322.4L-195.6,318.8L-197.1,317.7L-199.4,317.2L-201.0,314.6L-202.8,312.5L-205.8,311.7L-206.9,309.6L-208.4,310.1L-208.7,313.6L-210.4,317.5L-210.2,320.8L-207.9,322.7L-206.9,326.0L-205.1,326.8L-202.8,328.6L-200.5,330.9L-199.7,334.8L-199.4,337.6L-197.6,340.9L-199.7,340.9L-202.8,338.9L-205.1,336.8L-206.6,334.3L-207.6,330.7L-208.1,328.1L-210.2,325.2L-212.8,324.2L-212.8,321.4L-212.2,318.8L-212.2,314.1L-213.5,308.3L-214.3,304.9L-214.8,301.7L-216.1,300.3L-218.1,301.4L-220.7,303.5L-223.2,303.0L-222.7,299.0L-223.2,295.5L-226.6,292.0L-228.9,288.4L-229.4,285.9L-231.4,285.1L-232.7,286.7L-236.6,287.6L-239.1,287.8L-241.7,288.1L-242.4,291.4L-244.8,292.8L-246.8,294.1L-251.2,298.4L-253.7,300.6L-256.5,303.0L-258.8,304.9L-258.8,310.7L-260.1,313.8L-259.9,318.0L-261.6,318.2L-261.4,320.6L-264.2,321.9L-266.0,323.7L-267.5,322.7L-269.3,318.8L-270.4,315.6L-272.9,311.2L-275.5,304.3L-276.8,300.3L-278.0,294.9L-278.0,291.1L-278.3,289.2L-278.8,286.2L-279.6,287.3L-282.6,290.3L-284.4,289.8L-286.2,287.8L-287.8,286.2L-284.4,284.2L-287.0,284.5L-289.0,282.3L-291.6,281.5L-293.1,278.9L-294.2,277.2L-299.0,277.8L-304.9,278.1L-309.3,277.5L-316.4,276.7L-318.5,273.2L-320.3,272.1L-324.1,274.1L-327.4,273.5L-330.0,271.5L-334.4,267.2L-335.9,263.9L-339.0,262.7L-340.0,264.2L-341.5,265.7L-340.2,268.6L-337.2,272.7L-336.1,274.4L-335.9,276.7L-334.4,278.9L-334.4,277.0L-333.3,275.2L-332.3,277.5L-332.3,279.5L-333.1,280.3L-329.7,280.6L-327.4,280.9L-325.1,279.8L-322.8,277.5L-321.0,276.1L-320.0,274.7L-320.0,278.4L-319.0,280.1L-314.4,282.3L-311.3,285.4L-312.6,288.4L-314.4,290.9L-316.4,295.2L-319.8,297.6L-323.1,299.0L-325.9,300.3L-330.8,302.5L-333.8,305.1L-338.7,307.0L-342.8,308.8L-349.2,311.5L-353.0,311.7L-353.8,310.1L-354.6,306.2L-355.1,302.2L-355.6,300.6L-359.4,294.9L-364.0,288.1L-365.8,284.0L-367.1,280.9L-369.2,277.8L-371.2,275.0L-373.5,271.2L-375.3,269.5L-374.8,265.4L-376.6,270.7L-378.6,268.3L-379.9,266.0L-380.9,263.9L-381.7,260.1L-378.6,260.7L-376.3,259.5L-375.3,257.7L-374.8,255.5L-373.5,252.2L-372.8,250.6L-372.8,247.2L-371.7,243.7L-373.5,243.7L-375.8,243.1L-378.1,245.0L-380.4,245.6L-382.5,244.0L-385.8,242.7L-386.3,244.6L-388.6,245.0L-389.9,243.7L-392.0,243.1L-394.3,242.4L-394.8,240.2L-396.8,238.2L-395.8,234.9L-397.6,234.3L-397.3,232.6L-395.8,230.6L-398.1,229.9L-401.9,229.6L-403.0,231.3L-404.5,232.3L-405.8,230.6L-406.5,232.6L-405.5,234.9L-403.0,238.5L-403.0,240.2L-405.5,239.5L-404.2,241.1L-406.0,240.5L-405.0,244.3L-406.8,244.3L-407.8,242.4L-408.8,243.1L-409.9,240.5L-408.8,238.5L-410.4,238.2L-411.4,235.9L-412.7,234.3L-414.7,230.9L-414.7,228.2L-415.5,225.5L-418.1,223.7L-422.4,220.6L-425.5,218.5L-426.3,215.2L-427.5,214.1L-429.1,215.9L-429.8,213.4L-432.9,213.8L-432.4,215.6L-432.9,217.4L-429.8,220.2L-428.0,224.1L-422.9,226.2L-423.7,227.5L-421.1,228.9L-418.3,230.6L-417.0,232.3L-417.3,233.3L-418.3,232.6L-420.4,230.9L-422.2,233.6L-420.6,235.6L-421.9,236.6L-423.2,239.5L-424.5,238.9L-423.2,235.9L-424.5,232.6L-426.5,230.2L-428.0,229.9L-429.6,228.6L-432.1,227.9L-434.2,225.5L-437.5,222.7L-438.0,220.6L-439.3,218.5L-441.6,217.4L-443.9,219.2L-445.7,219.9L-447.5,221.6L-450.6,221.3L-454.2,220.6L-456.5,222.3L-456.0,224.8L-458.8,227.9L-462.1,230.2L-464.4,232.6L-465.2,234.3L-463.9,236.9L-465.7,238.2L-466.2,240.5L-469.3,242.4L-470.0,243.4L-473.4,243.4L-475.7,243.4L-478.0,245.3ZM442.9,245.6L441.1,244.0L439.3,241.8L437.0,242.4L434.2,242.4L434.7,237.9L432.9,236.6L434.4,231.9L434.9,228.6L434.4,225.1L433.4,222.7L435.7,220.9L437.5,219.5L442.6,220.2L447.5,220.6L452.1,221.3L453.1,220.6L454.1,216.3L454.4,213.0L454.1,210.8L451.8,208.6L451.6,206.7L448.5,205.2L445.9,204.8L444.9,202.5L448.2,201.0L452.1,201.8L453.1,201.8L452.6,197.4L454.4,198.6L457.5,198.2L460.0,196.7L462.1,192.2L464.6,191.4L467.4,188.1L469.2,183.9L471.3,182.2L474.9,182.2L477.7,180.9L479.5,180.0L480.0,178.3L479.2,175.6L478.4,173.0L477.9,168.4L478.4,165.6L481.5,165.1L484.3,162.7L484.1,166.0L483.6,169.8L482.3,173.0L481.5,176.1L483.3,177.9L485.1,179.6L488.2,178.7L491.8,177.0L493.8,180.0L497.1,178.7L500.7,176.5L505.1,177.9L508.1,177.0L508.4,175.2L511.2,172.0L511.0,168.4L512.2,164.2L515.1,162.2L516.6,165.6L518.9,166.0L519.7,162.2L519.9,159.3L517.4,157.9L517.4,155.4L520.7,153.9L525.0,153.4L528.9,153.9L531.4,151.8L534.5,151.8L532.0,150.3L530.7,147.7L526.3,148.8L521.2,150.3L516.1,152.4L514.0,149.3L511.7,146.1L512.0,140.8L512.5,134.7L515.8,130.6L519.9,125.3L522.2,123.5L521.7,119.9L519.2,118.6L514.0,119.9L511.5,125.3L509.2,130.6L505.1,135.2L501.7,138.6L501.2,147.7L504.6,149.8L505.6,154.4L500.7,157.9L500.0,162.2L499.2,167.4L497.1,169.8L493.8,172.5L491.0,173.4L490.0,170.7L490.2,167.4L487.7,162.7L485.9,156.9L484.6,153.4L482.8,156.4L477.7,160.8L475.1,161.3L471.5,156.4L470.5,149.3L470.0,146.1L470.0,140.8L472.8,138.0L476.9,134.7L481.5,130.6L485.4,124.1L488.4,120.5L490.5,116.1L494.1,109.0L495.6,104.3L499.4,98.7L505.8,92.2L511.0,88.4L517.9,84.6L523.2,80.7L528.1,81.5L532.7,84.6L536.8,86.9L534.0,91.4L539.1,91.4L543.0,94.4L546.8,95.8L554.5,102.2L560.9,106.3L562.9,111.6L559.6,116.7L554.5,116.7L546.8,114.8L541.2,110.3L541.7,114.2L545.5,120.5L546.3,126.5L550.6,130.1L554.5,130.1L553.2,127.1L550.6,122.9L554.5,124.7L558.8,125.9L560.9,125.9L559.6,120.5L564.7,114.8L569.8,117.4L570.4,114.2L569.8,107.6L568.0,100.1L575.0,101.5L576.2,105.6L572.4,109.0L577.5,111.6L581.4,107.0L585.2,103.6L592.9,98.7L595.4,102.9L598.0,100.8L603.1,100.1L608.2,98.0L612.3,91.4L621.0,95.1L628.2,98.0L630.0,90.0L628.2,82.3L632.6,74.2L633.8,66.6L636.4,63.9L642.8,67.4L643.6,78.3L642.8,90.0L645.6,99.4L642.0,109.0L640.2,114.8L642.8,115.5L644.8,111.6L644.8,107.0L649.2,104.3L655.6,107.0L658.2,106.3L655.6,102.2L647.9,98.7L649.2,90.0L647.4,78.3L649.2,68.3L655.6,72.5L658.2,70.9L663.3,74.2L667.9,76.7L669.7,86.2L671.5,78.3L663.3,61.3L672.2,58.5L678.6,57.6L679.9,47.1L687.6,41.0L697.8,35.8L708.1,33.7L714.5,31.5L718.3,22.4L724.2,17.7L729.8,22.4L733.7,29.3L742.6,30.4L747.8,37.9L747.2,48.1L742.6,53.9L736.2,56.7L731.1,62.2L727.3,66.6L732.4,65.7L738.8,63.9L745.2,63.9L747.8,62.2L754.2,59.4L761.8,64.8L772.1,59.4L781.0,61.3L784.9,63.0L788.7,67.4L788.7,78.3L790.0,82.3L795.1,78.3L797.7,79.1L805.4,78.3L813.0,78.3L815.6,70.0L817.4,66.6L825.8,69.2L831.0,71.7L838.6,74.2L846.3,82.3L856.6,81.5L863.0,83.8L866.8,92.2L869.4,93.7L877.0,92.2L884.7,91.4L889.8,97.3L893.7,97.3L893.7,89.2L900.1,90.7L907.8,92.2L912.9,94.4L919.3,98.0L925.7,101.5L932.1,107.6L930.8,110.9L938.5,110.9L944.4,116.7L941.0,120.5L937.2,126.5L935.4,127.1L929.5,126.5L923.1,120.5L920.6,117.4L919.3,120.5L914.2,125.3L911.6,125.3L915.4,135.2L916.2,139.1L910.3,138.0L903.9,141.9L897.5,146.7L893.2,151.8L887.3,148.8L882.2,149.8L879.6,151.8L875.8,155.4L874.5,161.3L875.2,162.2L873.2,167.4L875.0,169.8L871.9,175.2L871.4,177.0L866.8,183.1L863.5,183.9L862.4,188.1L858.4,192.6L856.6,188.1L855.5,179.6L856.0,170.7L858.6,163.7L862.4,160.3L869.4,151.3L874.5,146.1L878.3,138.0L874.5,139.1L873.2,142.9L867.6,148.2L868.1,141.9L864.2,142.4L857.8,144.5L854.0,152.4L854.0,154.9L848.9,155.9L843.2,153.9L838.6,153.9L831.0,154.9L823.8,154.9L816.9,161.3L811.0,168.4L807.9,176.1L804.1,177.0L807.9,180.5L813.0,178.7L816.9,181.8L818.9,183.1L818.2,188.1L817.1,192.2L816.4,200.2L813.0,207.9L809.2,213.4L804.1,217.7L797.7,223.0L795.1,222.0L791.8,224.8L789.5,226.5L789.2,229.9L783.9,233.3L783.3,235.3L785.9,237.2L788.5,242.4L788.7,245.6L787.7,248.4L784.1,249.7L780.5,250.0L781.0,245.6L781.3,240.8L777.2,239.5L776.9,237.6L777.7,233.9L775.4,232.9L772.1,233.9L767.5,236.9L769.5,231.3L770.0,229.9L767.0,229.6L763.4,232.9L758.8,235.9L761.6,239.8L763.1,242.1L766.2,239.8L770.8,241.1L770.8,242.7L765.2,245.6L762.6,248.7L765.7,253.4L767.0,256.4L769.3,258.9L769.3,261.0L766.4,263.0L769.3,264.2L769.3,266.9L767.0,269.8L763.4,275.5L759.5,279.8L756.0,283.1L749.6,285.9L747.8,286.5L743.4,287.8L739.8,288.9L739.3,291.4L738.0,289.8L736.5,288.1L733.7,288.1L730.6,290.0L728.3,293.6L728.0,295.8L729.8,298.4L732.7,301.7L734.2,302.7L736.8,308.8L736.8,313.8L733.9,316.4L731.4,318.0L730.4,320.1L725.5,322.4L726.0,318.8L724.5,317.7L722.2,317.2L720.6,314.6L718.8,312.5L715.8,311.7L714.7,309.6L713.2,310.1L712.9,313.6L711.2,317.5L711.4,320.8L713.7,322.7L714.7,326.0L716.5,326.8L718.8,328.6L721.1,330.9L721.9,334.8L722.2,337.6L724.0,340.9L721.9,340.9L718.8,338.9L716.5,336.8L715.0,334.3L714.0,330.7L713.5,328.1L711.4,325.2L708.8,324.2L708.8,321.4L709.4,318.8L709.4,314.1L708.1,308.3L707.3,304.9L706.8,301.7L705.5,300.3L703.5,301.4L700.9,303.5L698.4,303.0L698.9,299.0L698.4,295.5L695.0,292.0L692.7,288.4L692.2,285.9L690.2,285.1L688.9,286.7L685.0,287.6L682.5,287.8L679.9,288.1L679.2,291.4L676.8,292.8L674.8,294.1L670.4,298.4L667.9,300.6L665.1,303.0L662.8,304.9L662.8,310.7L661.5,313.8L661.7,318.0L660.0,318.2L660.2,320.6L657.4,321.9L655.6,323.7L654.1,322.7L652.3,318.8L651.2,315.6L648.7,311.2L646.1,304.3L644.8,300.3L643.6,294.9L643.6,291.1L643.3,289.2L642.8,286.2L642.0,287.3L639.0,290.3L637.2,289.8L635.4,287.8L633.8,286.2L637.2,284.2L634.6,284.5L632.6,282.3L630.0,281.5L628.5,278.9L627.4,277.2L622.6,277.8L616.7,278.1L612.3,277.5L605.2,276.7L603.1,273.2L601.3,272.1L597.5,274.1L594.2,273.5L591.6,271.5L587.2,267.2L585.7,263.9L582.6,262.7L581.6,264.2L580.1,265.7L581.4,268.6L584.4,272.7L585.5,274.4L585.7,276.7L587.2,278.9L587.2,277.0L588.3,275.2L589.3,277.5L589.3,279.5L588.5,280.3L591.9,280.6L594.2,280.9L596.5,279.8L598.8,277.5L600.6,276.1L601.6,274.7L601.6,278.4L602.6,280.1L607.2,282.3L610.3,285.4L609.0,288.4L607.2,290.9L605.2,295.2L601.8,297.6L598.5,299.0L595.7,300.3L590.8,302.5L587.8,305.1L582.9,307.0L578.8,308.8L572.4,311.5L568.6,311.7L567.8,310.1L567.0,306.2L566.5,302.2L566.0,300.6L562.2,294.9L557.6,288.1L555.8,284.0L554.5,280.9L552.4,277.8L550.4,275.0L548.1,271.2L546.3,269.5L546.8,265.4L545.0,270.7L543.0,268.3L541.7,266.0L540.7,263.9L539.9,260.1L543.0,260.7L545.3,259.5L546.3,257.7L546.8,255.5L548.1,252.2L548.8,250.6L548.8,247.2L549.9,243.7L548.1,243.7L545.8,243.1L543.5,245.0L541.2,245.6L539.1,244.0L535.8,242.7L535.3,244.6L533.0,245.0L531.7,243.7L529.6,243.1L527.3,242.4L526.8,240.2L524.8,238.2L525.8,234.9L524.0,234.3L524.3,232.6L525.8,230.6L523.5,229.9L519.7,229.6L518.6,231.3L517.1,232.3L515.8,230.6L515.1,232.6L516.1,234.9L518.6,238.5L518.6,240.2L516.1,239.5L517.4,241.1L515.6,240.5L516.6,244.3L514.8,244.3L513.8,242.4L512.8,243.1L511.7,240.5L512.8,238.5L511.2,238.2L510.2,235.9L508.9,234.3L506.9,230.9L506.9,228.2L506.1,225.5L503.5,223.7L499.2,220.6L496.1,218.5L495.3,215.2L494.1,214.1L492.5,215.9L491.8,213.4L488.7,213.8L489.2,215.6L488.7,217.4L491.8,220.2L493.6,224.1L498.7,226.2L497.9,227.5L500.5,228.9L503.3,230.6L504.6,232.3L504.3,233.3L503.3,232.6L501.2,230.9L499.4,233.6L501.0,235.6L499.7,236.6L498.4,239.5L497.1,238.9L498.4,235.9L497.1,232.6L495.1,230.2L493.6,229.9L492.0,228.6L489.5,227.9L487.4,225.5L484.1,222.7L483.6,220.6L482.3,218.5L480.0,217.4L477.7,219.2L475.9,219.9L474.1,221.6L471.0,221.3L467.4,220.6L465.1,222.3L465.6,224.8L462.8,227.9L459.5,230.2L457.2,232.6L456.4,234.3L457.7,236.9L455.9,238.2L455.4,240.5L452.3,242.4L451.6,243.4L448.2,243.4L445.9,243.4L443.6,245.3ZM442.1,246.2L443.6,245.9L449.5,247.8L452.1,248.4L455.7,246.5L464.9,243.1L470.0,243.1L477.2,242.7L482.5,241.5L485.4,242.1L483.6,243.1L484.3,246.2L484.8,249.7L483.1,252.2L485.6,254.3L491.0,255.2L495.9,256.7L499.4,260.4L503.3,262.4L507.1,263.0L508.4,261.0L508.7,257.7L512.2,255.2L516.1,256.1L518.6,257.7L521.7,259.2L526.8,259.8L531.4,261.3L533.7,260.4L536.6,259.5L539.9,260.1L540.4,263.9L543.0,270.4L543.7,272.1L545.5,276.4L548.1,281.2L551.7,286.7L552.4,293.3L555.8,297.6L558.3,304.1L562.2,307.0L566.0,310.4L568.0,312.0L567.5,314.6L572.4,317.7L577.5,315.9L582.6,315.4L588.5,314.1L588.8,317.7L587.2,320.3L584.7,324.5L582.6,328.6L580.1,333.0L573.2,339.4L568.6,343.2L566.0,345.5L563.4,348.9L561.9,350.4L559.9,352.7L558.8,354.7L557.6,356.5L556.5,359.9L557.8,361.9L558.3,366.3L559.1,370.2L560.6,371.0L561.1,375.4L561.1,381.8L561.4,383.3L559.6,386.5L554.5,389.5L551.9,391.4L550.1,393.8L546.5,396.2L547.6,399.5L548.1,402.8L548.1,407.5L545.5,410.1L541.7,411.5L540.7,413.5L541.4,416.3L540.4,420.7L536.6,424.8L534.0,428.6L528.6,434.1L523.0,437.1L518.6,437.5L514.0,437.5L508.4,439.6L504.3,437.8L503.0,434.1L504.0,430.1L501.5,425.7L499.4,421.0L496.1,415.2L495.3,410.6L494.3,404.8L491.5,398.7L489.2,393.5L487.4,389.5L487.4,386.0L488.2,383.9L489.2,379.4L491.5,377.0L492.5,372.8L491.2,368.9L491.0,367.1L490.0,362.2L488.7,359.9L487.4,356.8L485.4,354.5L482.8,351.4L481.0,349.4L479.5,346.3L481.3,343.5L481.8,341.9L482.0,338.6L482.3,336.8L481.8,334.5L480.0,333.0L478.4,332.7L475.1,333.2L472.6,333.5L470.8,330.9L468.5,328.3L465.9,328.1L463.3,328.3L460.3,328.9L456.7,330.1L451.8,332.5L447.0,330.9L441.8,332.2L437.5,333.2L433.4,331.2L429.6,328.3L425.2,325.5L423.4,322.7L422.1,320.1L419.8,317.2L418.5,316.2L416.2,314.1L414.4,312.5L414.4,309.6L412.4,306.4L415.0,303.0L416.2,297.4L415.5,293.9L413.7,290.0L413.9,288.1L416.5,282.0L418.8,279.2L420.1,275.2L422.9,272.1L424.2,270.1L427.8,268.3L431.1,265.7L432.6,262.7L432.1,259.5L433.6,257.0L437.7,253.1L439.8,251.9L441.3,248.7ZM442.6,195.9L444.4,194.3L445.7,192.2L449.5,191.4L450.3,190.2L449.0,190.6L447.0,189.8L443.6,188.5L446.7,186.0L445.2,184.8L445.4,182.2L449.3,182.2L449.5,180.5L449.8,178.7L448.0,177.4L449.0,175.6L444.7,176.5L444.1,175.2L445.2,173.0L444.7,171.1L442.4,173.9L442.9,170.7L443.1,168.8L441.3,167.4L442.4,166.0L442.4,163.2L443.6,160.3L444.4,158.4L449.5,158.1L449.3,159.3L447.0,161.8L446.4,163.7L448.8,162.7L452.1,162.7L452.6,163.7L451.8,165.6L450.8,167.4L450.0,168.8L450.5,169.3L449.0,170.7L450.8,170.7L452.1,171.6L453.6,175.2L454.1,177.0L455.7,177.4L456.9,179.2L457.5,181.3L458.0,183.5L457.7,184.8L458.5,183.9L460.5,184.3L461.7,186.0L461.3,187.7L460.5,188.5L459.5,190.2L460.8,190.6L460.7,191.8L459.7,192.6L457.8,193.4L454.4,193.0L452.3,193.9L450.9,194.3L449.5,193.4L448.2,194.7L448.0,195.5L446.7,195.1L443.9,196.4ZM432.1,190.4L436.0,188.9L440.8,187.3L441.8,183.9L441.6,182.6L441.1,179.6L443.1,177.9L442.6,176.5L441.6,174.3L438.3,173.4L436.0,174.8L434.9,176.5L436.0,177.4L435.2,178.3L431.6,178.7L431.1,180.0L431.9,182.2L434.2,183.1L432.9,184.3L431.9,185.6L430.6,187.7L431.1,188.9ZM485.4,172.0L489.5,170.2L489.2,173.9L487.4,176.5L485.9,174.3ZM482.3,173.0L484.6,173.0L484.6,175.2L482.8,174.8ZM503.8,165.6L505.8,161.8L505.3,164.6L504.0,166.5ZM499.2,169.3L501.0,164.6L499.7,168.4ZM513.0,159.8L516.6,158.8L515.6,161.3L513.5,161.3ZM513.8,156.9L516.1,156.4L515.3,157.9ZM438.3,139.7L440.6,139.1L439.8,143.5ZM453.1,148.2L454.9,147.7L453.9,151.8ZM439.3,159.8L441.3,158.8L440.6,161.8L438.5,164.6L438.3,162.7ZM479.2,224.1L481.3,222.3L481.5,225.8L480.8,227.9L479.5,226.5ZM478.2,229.6L480.8,228.6L482.0,230.9L481.5,235.3L479.7,236.2L478.7,234.3ZM488.9,239.2L491.5,238.5L497.1,238.2L495.9,242.4L493.6,243.1L489.5,240.8ZM517.4,247.2L523.0,247.5L524.5,248.1L521.2,249.1L517.6,248.1ZM539.9,248.7L541.7,247.8L545.8,246.5L544.2,248.7L541.7,250.0ZM516.1,235.9L519.9,238.5L520.2,239.2L517.4,237.2ZM528.1,245.0L529.4,244.3L528.9,245.9ZM523.5,235.3L525.3,234.9L524.8,235.9ZM463.3,233.9L465.4,232.9L465.9,234.3L464.9,234.9ZM466.9,232.6L468.2,232.9L467.4,233.1ZM460.3,235.9L461.3,235.6L461.0,236.6ZM603.9,85.4L598.0,84.6L594.2,83.1L590.8,79.9L589.6,75.9L591.9,70.0L593.4,63.0L596.0,56.7L599.8,47.1L605.7,40.0L613.4,34.2L623.6,28.7L633.3,26.5L631.8,32.6L624.9,36.9L613.4,44.1L607.7,52.0L603.1,59.4L600.0,63.9L599.5,71.7L601.3,79.1ZM607.0,88.4L611.6,86.9L609.5,91.4L607.5,91.4ZM580.8,96.5L584.7,93.7L586.0,97.3L582.6,99.4ZM499.4,31.5L493.0,20.1L491.8,11.6L485.4,1.2L485.4,-9.9L498.2,-12.8L503.3,-7.1L511.0,3.9L504.6,14.1L504.6,21.3ZM512.2,11.6L518.6,15.3L516.1,22.4L511.7,18.9ZM711.9,11.6L718.3,15.3L726.0,9.1L723.4,-1.5L714.5,-0.1ZM699.1,-2.9L706.8,3.9L713.2,-7.1L708.1,-22.0L700.4,-12.8ZM809.2,44.1L811.8,50.0L818.2,48.1L824.6,48.1L831.0,45.1L832.2,41.0L823.3,36.9L816.9,34.7L810.5,36.9ZM833.5,46.1L838.6,50.0L842.5,46.1L838.6,43.1ZM815.6,61.3L819.4,63.9L824.6,63.0L823.3,57.6L818.2,57.6ZM-7.4,81.5L-3.6,83.8L2.8,82.3L1.5,78.3L-3.6,77.5ZM914.2,81.5L918.0,83.8L924.4,82.3L923.1,78.3L918.0,77.5ZM875.2,158.8L877.8,155.4L878.8,156.9L876.5,159.3ZM635.1,63.0L640.2,63.9L637.7,60.4ZM822.8,177.9L820.7,181.8L820.2,188.1L820.7,194.3L821.0,200.2L820.7,206.0L820.5,209.3L821.0,211.9L822.5,209.3L824.3,211.6L823.3,207.9L822.5,204.1L823.0,200.2L827.6,201.4L823.8,199.0L824.6,194.3L824.0,188.1L823.8,183.1ZM815.6,227.5L815.1,223.7L816.6,221.3L819.2,221.3L820.0,217.0L820.0,213.8L823.3,217.0L826.6,218.8L829.2,217.7L830.4,220.9L826.9,222.3L823.8,226.2L819.7,223.7L818.2,224.8L816.4,224.1L817.4,226.5L818.7,226.5ZM817.9,227.5L819.4,230.9L820.7,233.9L819.4,238.2L818.2,242.4L817.9,246.5L815.6,249.1L815.1,246.9L814.6,248.4L812.8,250.0L811.8,248.7L811.0,250.0L807.4,248.7L807.7,250.9L804.8,253.7L803.1,251.2L803.8,250.0L800.2,250.3L796.1,250.9L792.3,252.2L792.6,250.6L796.9,247.5L800.8,247.2L803.3,246.5L805.6,246.5L805.4,245.0L806.9,243.7L807.7,240.8L808.7,240.8L808.4,243.1L811.0,241.8L813.0,239.5L815.1,236.2L814.8,232.9L815.3,230.6L816.4,228.6L817.6,229.6ZM796.4,254.9L797.4,251.9L801.0,250.9L802.0,252.5L800.8,254.0L798.2,255.5ZM789.2,254.9L791.3,252.2L794.4,253.1L794.9,255.5L793.3,259.8L791.8,261.0L790.5,260.1L790.8,256.4ZM834.8,214.5L838.1,213.4L836.1,215.6ZM829.7,219.5L832.2,217.4L831.0,219.5ZM854.5,195.5L857.1,193.4L856.0,195.9ZM780.3,254.0L782.1,253.4L781.3,254.3ZM767.0,278.1L769.3,278.4L768.0,283.4L766.4,287.0L764.7,284.0L765.9,280.1ZM735.5,294.1L737.5,292.2L741.1,292.2L740.1,295.5L737.5,297.1L735.5,296.0ZM765.9,296.3L770.0,296.3L770.0,300.3L768.2,303.0L768.8,307.0L772.8,308.3L774.9,310.9L774.4,311.7L772.1,309.4L769.5,308.8L767.0,309.1L765.9,307.0L764.4,305.7L765.4,302.2ZM765.4,309.9L767.7,309.9L768.2,312.5L767.0,313.0ZM775.4,312.2L778.0,312.2L779.0,315.6L777.2,318.2L776.7,315.4ZM769.5,313.8L772.1,314.9L771.1,317.5L769.5,317.5ZM771.8,316.2L773.4,316.4L772.6,320.8L770.8,319.5ZM774.4,315.6L774.9,316.4L773.1,320.1ZM774.1,318.5L775.9,318.8L775.4,319.8ZM763.4,315.1L762.6,317.7L757.2,322.9L757.5,321.9L761.1,318.0ZM769.5,326.5L770.3,324.0L773.4,322.1L776.4,322.7L778.5,319.3L780.5,321.9L781.3,325.8L780.3,328.3L778.5,327.1L779.0,329.9L777.7,329.6L775.2,327.8L774.1,325.2L771.6,325.8L769.8,326.8ZM737.8,339.1L739.8,340.1L742.1,338.4L746.5,336.3L749.0,333.2L751.3,331.7L754.2,329.1L756.2,326.5L758.5,328.3L759.5,329.4L762.6,331.2L759.0,333.7L758.3,336.0L759.3,338.9L761.8,341.9L758.8,342.5L758.0,346.0L756.2,347.8L755.4,350.9L754.2,353.7L754.2,354.7L750.6,355.0L746.5,352.7L743.2,352.2L739.3,351.9L738.8,349.1L736.5,346.0L736.8,344.5L736.2,341.9ZM701.2,330.1L706.8,331.2L708.8,333.5L709.9,334.8L713.2,337.6L715.2,339.1L717.8,340.1L720.6,342.7L722.9,344.2L722.2,347.1L724.5,347.1L725.7,350.4L728.6,352.2L728.3,356.0L728.0,359.4L725.0,359.4L724.2,357.3L719.1,354.2L714.2,347.1L710.6,341.9L710.1,340.1L707.6,338.6L703.2,334.0ZM726.5,348.9L729.1,348.6L730.4,352.2L728.3,351.2ZM726.5,361.9L728.6,359.6L730.6,360.1L735.2,361.7L739.8,362.2L741.4,360.9L745.7,363.0L750.1,364.3L750.1,366.9L745.7,366.1L740.1,365.3L735.0,364.5L729.8,363.5ZM745.7,362.5L749.3,362.2L748.8,363.0L745.7,363.0ZM750.3,365.6L753.4,365.8L752.1,367.1ZM754.2,366.1L756.0,365.8L755.4,367.4L754.2,367.1ZM756.2,366.1L760.0,365.8L762.4,366.1L761.8,367.1L758.0,367.6L756.2,367.4ZM763.9,366.1L767.0,366.1L771.6,365.3L772.1,366.1L769.5,367.4L764.4,367.1ZM761.8,368.9L764.9,368.7L766.4,370.5L764.4,371.0ZM773.4,371.0L775.9,368.2L778.5,366.6L783.1,366.1L781.0,367.6L777.2,370.0L774.6,371.0ZM762.9,357.6L763.1,353.5L761.3,351.4L762.6,347.1L763.9,344.2L764.7,342.5L766.4,341.2L769.5,341.7L773.4,342.1L776.7,340.4L777.7,340.7L775.9,343.5L772.1,343.3L768.2,343.3L765.2,343.5L764.7,346.8L766.4,348.1L768.2,346.8L771.6,346.5L773.1,346.8L770.3,348.6L768.5,349.4L767.7,349.6L770.0,353.0L771.1,354.7L771.6,356.3L770.5,356.8L768.5,356.5L768.2,354.7L766.7,351.4L765.2,351.7L765.4,354.7L765.4,358.9L762.9,358.9ZM771.1,356.0L772.6,356.5L771.3,358.9ZM783.6,342.2L784.9,338.9L786.7,340.7L785.4,342.5L786.9,343.7L784.9,345.5L784.9,343.5L784.1,346.5ZM784.6,352.7L787.4,351.7L792.0,353.0L791.5,354.2L787.4,353.2L784.9,353.7ZM779.8,352.7L782.8,352.7L782.3,354.2L780.3,354.0ZM793.1,346.8L796.4,345.5L800.5,346.8L800.8,349.6L801.5,353.0L804.1,353.2L806.6,350.1L810.2,348.3L813.0,349.6L817.4,350.9L818.9,351.4L824.8,353.7L827.1,354.2L830.4,357.8L833.5,359.6L835.6,361.4L833.5,361.7L836.1,365.0L836.8,366.6L839.4,367.9L841.2,370.2L843.5,370.8L843.0,371.8L838.6,371.0L835.6,370.5L834.0,368.9L831.0,365.6L827.1,364.0L826.4,363.8L824.0,365.8L822.0,368.2L818.2,367.9L816.6,366.3L814.3,365.3L810.5,366.1L809.5,363.5L812.3,363.0L810.5,358.6L805.4,356.3L801.5,354.7L799.0,353.7L797.2,354.7L795.1,351.9L799.0,350.9L795.1,350.1L792.6,348.3ZM836.8,358.6L841.2,357.3L845.0,355.3L847.1,355.5L846.3,357.8L842.5,360.4L838.6,360.4ZM843.0,351.2L847.6,354.2L848.9,356.5L847.9,355.3L845.0,352.7ZM853.0,358.1L856.3,361.9L854.5,361.2ZM865.5,368.4L868.8,369.5L867.6,369.7ZM868.6,366.1L870.1,368.9L869.4,367.6ZM877.0,397.0L883.4,401.7L884.7,403.4L880.9,401.7ZM883.7,383.3L885.2,384.9L884.2,385.2ZM911.1,390.0L914.4,390.0L913.9,391.9L911.3,391.6ZM914.7,387.3L917.7,386.5L916.2,388.1ZM822.0,372.1L824.6,376.8L824.6,380.7L827.1,381.2L829.2,384.7L830.4,388.4L833.0,394.9L836.8,396.8L839.2,399.8L842.5,403.6L843.2,406.4L847.3,410.1L849.6,410.6L849.1,413.5L849.4,417.5L850.4,421.0L849.1,426.0L848.6,429.2L845.8,433.8L844.5,436.8L843.2,440.6L841.2,446.3L841.2,448.2L836.1,449.5L832.0,453.4L829.7,451.8L828.1,449.5L827.4,450.8L824.6,452.8L819.7,451.1L816.6,449.5L814.8,446.3L813.8,443.1L810.7,442.1L811.8,439.9L810.5,437.8L807.9,440.9L809.5,437.1L810.0,432.6L809.2,434.1L805.9,438.4L805.1,439.6L803.1,439.0L800.8,434.1L799.5,431.3L795.1,431.0L793.1,429.5L787.2,430.1L779.8,432.0L774.6,434.1L774.4,435.9L769.3,436.8L764.4,436.8L759.0,440.3L754.2,439.6L751.9,438.4L751.6,435.9L753.1,435.0L753.4,431.0L751.6,426.6L750.6,421.5L749.6,418.3L747.0,413.8L748.0,410.4L747.8,406.4L749.6,401.7L750.1,403.6L751.9,401.2L756.0,398.4L760.8,397.6L764.4,396.5L768.2,394.1L770.0,391.4L771.8,387.1L773.6,389.5L773.4,387.3L775.9,386.0L775.9,384.1L778.5,382.0L782.1,379.9L784.1,381.2L785.1,383.3L788.7,383.1L788.7,381.2L790.5,378.1L792.0,376.5L793.8,376.0L796.4,373.9L799.0,374.9L802.8,375.7L805.4,375.2L807.9,376.2L805.4,378.9L805.1,381.2L803.8,383.1L807.4,385.5L810.5,387.6L813.6,389.2L814.6,390.3L817.6,390.0L819.2,386.0L819.7,382.0L819.7,379.4L820.5,377.0L820.2,374.9L821.0,372.8ZM790.5,373.9L793.3,373.6L792.6,374.9L791.0,374.9ZM806.4,380.2L807.7,380.2L807.2,381.5ZM806.9,442.5L809.5,442.1L810.7,443.1L807.9,443.4ZM827.6,458.8L832.2,460.1L836.1,459.1L836.8,463.2L836.1,466.7L833.5,468.4L831.0,468.4L829.2,465.3L828.4,462.5ZM899.3,438.4L901.4,440.3L903.4,441.2L903.9,442.8L904.7,445.9L906.5,445.0L907.5,446.6L908.3,448.5L910.8,449.8L914.2,448.8L912.9,452.1L912.6,453.7L910.1,454.7L910.3,456.4L909.3,458.1L906.0,461.8L904.7,460.8L905.2,458.8L905.2,456.1L902.1,454.1L902.9,453.4L904.2,452.1L904.7,449.8L903.9,446.6L903.2,444.7L900.3,440.9ZM899.3,458.1L900.8,460.8L903.4,459.8L903.4,462.2L901.9,464.6L900.1,467.4L899.6,468.4L900.3,469.5L895.7,471.3L893.7,477.1L888.6,479.7L883.4,477.4L887.3,471.3L892.4,467.7L894.7,465.6L895.5,464.6L896.5,462.2L897.8,460.4ZM583.4,375.4L585.7,380.7L586.0,383.1L586.5,385.7L584.7,384.7L584.4,386.5L583.7,391.6L582.1,396.8L580.8,400.1L579.1,405.0L577.5,410.6L572.9,412.3L569.8,410.6L569.1,406.1L568.0,402.3L570.6,397.6L569.8,394.1L569.8,391.6L570.9,386.5L573.2,386.0L575.7,385.2L578.0,383.1L579.8,380.7L580.8,379.1L582.1,376.8ZM661.5,319.5L662.8,319.8L665.3,322.7L666.9,326.0L666.4,328.1L663.5,329.4L662.0,328.3L661.5,325.2L661.7,322.7ZM593.9,311.7L596.7,312.0L594.7,312.8ZM557.6,359.1L558.3,360.4L557.8,360.9ZM567.8,373.9L568.6,375.2L568.0,375.2ZM598.8,399.2L600.0,399.8L599.3,400.6ZM604.1,396.8L605.2,397.3L604.4,398.1ZM413.9,268.6L416.0,268.0L414.7,269.8ZM416.8,269.5L417.8,269.5L417.3,270.4ZM420.1,269.5L421.9,267.7L421.6,269.2ZM396.5,304.9L397.3,305.7L396.8,305.9ZM479.0,335.0L480.0,335.3L479.5,336.3ZM694.5,309.6L695.3,312.2L694.5,314.6L694.0,313.0ZM57.8,291.7L60.4,293.0L58.6,294.9L57.8,293.6ZM979.4,291.7L982.0,293.0L980.2,294.9L979.4,293.6ZM56.0,289.5L57.8,290.0L56.8,290.6ZM977.6,289.5L979.4,290.0L978.4,290.6ZM52.2,287.8L53.5,288.4L52.5,288.7ZM973.8,287.8L975.1,288.4L974.1,288.7ZM846.3,207.1L847.3,206.0L847.1,207.5ZM841.2,211.2L842.7,209.7L842.0,211.6ZM852.2,200.2L853.7,198.2L853.2,200.2ZM881.4,173.9L883.2,175.6L882.7,176.5Z"/><path fill="none" stroke="#f3e1e1" stroke-width=".75" stroke-linejoin="round" d="M141.6,200.2L213.5,200.2L215.0,201.4L221.7,202.9L228.1,204.1M240.9,209.7L243.2,211.2M246.0,222.3L246.3,224.8M255.0,221.6L255.0,222.7M261.9,218.1L266.0,215.2L274.2,215.2L276.0,213.8L277.2,210.8L278.0,209.0L280.0,206.2L282.4,206.5L283.6,207.5L283.6,212.7L284.7,214.5L285.7,215.6M96.2,92.9L96.2,149.8L101.4,151.3L105.2,156.4L108.0,153.9L110.3,152.4L115.4,159.3L119.3,166.0L124.4,170.7L124.1,174.3M1017.8,92.9L1017.8,149.8L1023.0,151.3L1026.8,156.4L1029.6,153.9L1031.9,152.4L1037.0,159.3L1040.9,166.0L1046.0,170.7L1045.7,174.3M157.4,256.4L163.3,256.1L173.0,260.1L180.2,260.1L180.2,258.6L184.6,258.6L188.7,262.2L189.9,265.1L193.3,266.9L195.1,264.5L197.6,264.5L200.4,268.9L202.5,271.2L203.5,274.4L208.4,275.8M221.2,307.0L221.2,305.1L222.4,302.7L225.8,302.7L224.2,299.8L224.2,298.2L228.8,298.2L228.8,303.3L229.6,303.3M231.2,303.8L228.6,307.2L226.5,309.0M228.6,307.2L232.4,309.9M233.7,310.9L235.2,308.8L237.6,308.6L239.9,306.2L244.2,305.7M237.8,315.9L240.4,316.2L242.9,316.4M245.0,323.7L245.0,321.1L245.7,319.8M273.6,293.0L273.4,296.0L273.6,297.6M259.1,322.7L257.8,326.0M274.7,314.1L272.1,315.9L270.3,320.6L271.9,322.9L271.9,325.5L273.1,326.5L277.7,326.5L279.5,328.9L284.4,328.6L283.6,333.0L284.9,335.8L283.4,337.3L285.2,338.6L285.9,341.4M285.9,341.4L285.4,340.1L278.5,340.1L278.5,341.7L280.3,343.0L278.0,343.2L278.0,345.0L279.5,347.3L278.3,355.3M278.3,355.3L276.2,354.2L277.7,351.4L270.6,350.6L268.8,347.8L264.4,344.8L261.9,343.5L259.1,343.5L255.5,340.9M264.4,344.8L264.7,347.1L261.1,351.2L257.5,353.2L255.7,356.3L253.4,356.0L251.6,355.3L251.6,353.2M278.3,355.3L270.6,357.6L268.0,363.2L270.6,367.9L272.4,370.2L276.5,368.9L276.5,372.8L279.0,372.7M279.0,372.7L281.3,376.8L280.6,382.8L279.5,384.9L280.6,386.8L279.3,390.0L277.0,392.3M279.0,372.7L282.4,372.8L289.8,369.5L290.0,374.1L292.3,376.8L296.4,378.1L299.0,379.4L302.3,380.2L303.1,386.8L307.7,386.8L308.0,389.5L310.0,391.9L309.2,394.1L308.2,396.2M279.3,390.0L281.8,394.1L281.8,399.2L283.4,404.5M308.2,396.2L305.9,394.9L299.2,395.7L296.9,402.8M283.4,404.5L285.2,404.5L287.7,401.7L292.6,404.5L296.9,402.8M283.4,404.5L285.7,405.0L282.1,409.2L282.4,416.0L279.0,420.4L278.0,426.3L277.0,428.3L277.5,434.1L278.5,438.1L276.7,441.2L275.2,445.6L275.7,452.1L273.6,455.1L273.4,463.2L272.9,466.7L273.6,472.0M296.9,402.8L301.0,407.3L306.7,410.1L309.7,412.0L307.2,416.9L312.8,417.5L314.6,417.5L317.4,412.3M308.2,396.2L309.0,398.7L309.0,402.5L314.4,403.1L315.4,407.8L318.2,408.1L317.4,412.3M317.4,412.3L319.5,413.8L319.7,416.0L314.4,420.1L309.7,425.7L308.2,432.6L307.7,437.1M309.7,425.7L313.8,427.4L317.4,429.5L320.5,432.9L320.5,436.2M285.9,341.4L289.5,342.7L292.8,340.7L293.4,338.1L296.2,335.3L291.8,334.0L296.4,334.3L301.0,333.0L301.8,331.2M301.8,331.2L300.0,329.4L300.8,327.3L302.8,326.5L301.8,325.2L304.1,323.2M301.8,331.2L303.9,331.7L303.3,333.0L304.9,334.5L303.9,338.6L306.2,341.2L308.7,340.7L312.6,339.6M311.0,329.4L310.5,331.7L308.7,334.3L310.5,336.0L312.6,339.6L314.1,339.4L317.4,338.6L319.0,335.5L317.9,332.5L319.0,329.9M317.4,338.6L321.8,338.9L324.8,334.3L325.1,333.7M451.6,248.4L452.8,252.8L454.1,257.0L448.0,259.2L447.7,261.3L444.4,263.3L439.3,265.4L434.9,267.7L434.9,271.8L444.9,278.4L460.3,289.2L465.4,292.8L465.6,294.9L468.0,294.7L472.0,293.6L476.4,289.8L487.9,282.6M434.9,270.7L423.4,270.7M434.9,271.8L434.9,275.5L426.5,275.5L426.5,282.6L423.9,284.0L423.9,288.7L413.7,288.7M487.9,282.6L482.5,279.5L481.3,275.0L482.5,273.0L482.0,268.9L482.5,263.9L481.5,263.3L480.5,257.7L478.4,256.4L476.4,252.5L478.2,249.7L479.2,242.7M481.5,263.3L483.6,258.9L486.6,256.7L486.6,254.3M444.9,278.4L440.3,278.4L443.1,301.7L443.6,304.3L433.4,304.3L429.8,304.6L427.8,304.1L426.0,306.2M415.0,303.0L420.6,301.4L422.9,302.7L426.0,306.2L428.0,312.5L425.7,312.8L422.1,311.7L418.3,311.7L414.4,312.5M414.2,309.4L417.8,308.8L421.9,310.1L417.8,309.9L414.2,310.7M418.8,316.2L422.1,314.3L422.1,311.7M423.2,321.4L425.2,319.0L428.5,318.8L430.1,321.1L430.8,322.7L427.8,326.8M428.0,312.5L429.8,313.8L433.4,312.2L435.7,315.1L436.2,317.7L437.7,317.7L441.3,317.2L443.1,317.7L443.1,315.1L445.9,312.2L446.2,310.4L448.8,309.1L452.1,307.8L455.4,305.4L457.7,305.7L459.8,306.2L466.2,304.6L468.0,300.9L468.0,294.7M422.1,320.1L425.2,319.0M430.8,322.7L433.1,325.5L435.4,325.0L437.7,329.4L438.0,333.2M436.2,317.7L436.0,322.7L435.4,325.0M443.1,317.7L445.2,319.5L450.0,319.8L450.3,324.2L449.0,327.1L450.0,331.4M450.0,316.2L450.0,319.8M443.1,317.7L443.1,318.0M450.0,316.2L455.4,316.2L457.2,315.9L459.5,316.2L458.5,320.1L459.0,323.2L458.7,326.8L460.3,328.9M459.5,316.2L460.8,320.6L461.3,326.8L461.3,328.6M459.5,316.2L463.3,313.0L466.4,314.3L466.9,317.7L464.4,321.4L464.1,328.1M457.7,305.7L458.2,308.3L459.8,309.9L462.8,312.2L463.3,313.0M450.0,316.2L445.9,312.2M466.4,314.3L466.7,312.0L467.7,309.6L471.3,308.6L475.1,310.9L479.0,310.9L482.8,309.9L489.2,310.7L492.0,309.1L493.3,310.7L493.6,312.5L494.6,314.9L492.5,316.2L490.2,320.3L487.4,326.5L484.3,326.5L482.8,328.1L479.2,332.2M492.0,309.1L491.8,307.0L496.9,300.6L497.1,294.9L497.9,291.1L495.9,288.7L495.3,284.2L493.6,285.1L487.9,282.6M495.3,284.2L498.2,282.6L518.6,293.6L518.6,292.2L521.2,292.2L521.2,286.7L521.2,259.2M521.2,286.7L537.6,286.7L537.6,287.3L551.7,286.7M518.6,293.6L518.6,303.8L515.8,304.1L513.5,311.7L515.8,315.1L515.8,316.4L517.9,319.0L517.4,321.9L519.2,323.2L521.7,324.2L527.3,331.4M493.6,312.5L495.9,316.7L496.9,319.0L493.0,319.0L496.1,322.7L496.6,325.0L494.6,328.6L494.3,331.7L497.9,336.8L498.4,338.9M496.1,322.7L499.4,324.5L504.8,324.0L505.8,321.4L509.4,321.1L512.8,317.2L515.8,316.4M498.4,338.9L491.2,338.9L486.1,338.9L486.1,341.9L482.3,341.9M482.3,338.6L486.1,338.9M498.4,338.9L500.7,335.5L504.6,335.5L504.8,333.2L506.9,331.7L509.9,333.2L514.5,334.0L519.7,331.4L522.2,330.9L527.3,331.4M494.1,355.5L490.7,356.3L488.4,357.3M498.4,338.9L502.5,344.8L498.7,350.1L497.9,354.5L494.1,357.1L491.5,356.8L488.4,359.4M482.3,341.9L482.3,338.6M486.1,341.9L486.4,347.1L489.2,350.6L487.2,351.9L485.6,354.5M486.1,338.9L491.2,341.2L494.1,345.8L494.3,348.3L494.1,350.4L492.8,350.9L489.2,350.6M488.4,359.4L490.7,359.6L499.7,359.6L500.5,363.0L505.8,364.8L506.9,362.5L509.2,362.5L513.0,363.2L513.3,368.9L514.0,372.8L518.6,372.6L518.4,376.0L513.5,376.0L513.5,378.1L518.6,378.1L516.6,390.0L512.0,391.4L504.6,390.8L493.6,389.7L487.4,389.5M527.3,331.4L529.9,333.5L532.7,332.7L536.0,335.5L536.3,338.4L537.3,339.1L533.0,343.0L533.0,348.1L532.0,350.1L531.4,351.7L532.2,355.8L532.7,361.2L536.0,365.6L531.2,366.1L529.9,368.2L530.4,370.8L529.9,374.9L531.4,379.1L533.5,379.1L533.5,376.0L529.9,376.5L526.8,374.4L522.0,373.4L518.6,372.6M536.0,335.5L538.9,335.3L544.0,333.7L547.6,331.7L549.1,332.7L544.2,333.7M549.1,332.7L546.5,338.1L544.2,341.9L544.0,344.5L544.0,347.1L553.7,352.2L557.6,356.5M544.0,347.1L535.3,347.1L533.0,348.1M535.3,347.1L536.0,350.6L535.3,350.6L531.4,351.7M536.0,350.6L535.0,354.2L532.2,355.8M518.6,293.6L518.6,292.2M551.7,286.7L551.7,296.3M555.8,297.6L551.9,300.3L550.6,307.5L549.6,311.7L546.8,316.4L545.0,317.2L544.5,322.4L541.7,324.2L542.4,322.9L544.5,322.4M550.6,307.5L554.2,305.9L559.6,307.0L565.7,312.2L567.5,311.7M565.7,312.2L564.2,316.2L567.3,315.6L567.0,316.4L569.8,321.4L577.5,324.0L580.1,324.0L580.1,333.0M577.5,324.0L572.4,331.7L564.7,334.0L562.2,334.5L562.2,346.8L563.7,348.9M562.2,334.5L558.3,335.8L554.5,335.3L549.4,333.2L549.1,332.7M541.7,324.2L544.2,326.5L546.8,330.4L547.6,331.7M544.5,322.4L544.0,320.1L544.0,318.2L541.7,316.7L541.7,313.0L540.9,313.0L539.1,313.8L538.6,318.0L535.8,319.5L531.4,319.5L528.6,319.8L525.8,320.1L521.7,318.0L520.4,321.4L517.9,319.0M527.3,331.4L519.7,331.4M536.0,365.6L541.2,368.2L541.7,368.9L544.2,368.9L545.5,374.1L553.2,374.4L560.6,371.3M541.7,368.9L542.4,372.3L540.9,379.4L542.2,380.7L534.5,383.3L535.0,385.2L541.4,387.9L545.5,382.0L549.1,382.6L548.8,386.0L547.3,388.4L545.5,386.8L545.3,382.0L545.5,374.1M534.5,383.3L531.2,385.7L526.3,391.1L522.0,390.8L516.6,390.0M522.0,390.8L523.8,394.1L528.1,398.1L532.5,402.8L537.3,403.4L540.4,400.3L541.7,396.2L540.9,393.0L541.7,390.0L541.4,387.9M522.0,390.8L519.9,391.4L516.8,391.4L511.0,392.2L511.0,402.3L508.4,402.3L508.4,410.1L508.4,420.4L501.7,421.3L499.4,421.0M508.4,410.1L510.4,416.0L515.1,413.8L516.1,411.5L522.5,412.6L525.8,408.7L532.5,402.8M537.3,403.4L538.9,408.7L539.1,413.2L537.3,412.9L536.0,415.8L539.1,415.8L541.4,415.8M526.3,423.9L529.9,421.0L532.5,423.6L529.4,426.8L526.8,426.0L526.3,423.9M434.4,226.2L436.2,226.2L440.3,226.2L441.3,227.2L439.5,229.2L439.5,232.6L438.0,233.6L439.3,235.9L438.5,237.9L438.3,241.8M452.6,220.9L455.4,222.7L459.0,223.0L461.6,224.1L465.4,224.4M463.6,191.8L464.6,193.4L468.0,196.3L469.7,196.3L472.0,198.2L473.6,198.2L478.2,200.2L476.7,205.6L472.8,210.8L474.6,211.6L475.1,211.9L474.1,214.9L475.1,218.1L476.4,219.5M476.7,205.6L481.8,206.0L484.1,208.2L480.2,211.6L475.1,211.9M481.8,206.0L484.1,206.0L490.5,206.0L490.0,203.3L492.5,201.0L489.2,195.1L493.8,192.2L495.1,192.6L495.6,192.2L494.8,188.1L493.3,184.3L493.6,180.0M484.1,208.2L488.4,207.9L492.3,209.7L492.3,213.0M492.3,209.7L498.4,208.2L501.0,204.1L500.5,201.8L495.6,200.2L492.5,201.0M465.9,190.6L468.2,191.0L472.0,191.4L472.6,193.0L473.1,194.3L472.8,195.9L473.6,198.2M472.6,193.0L472.6,188.9L474.6,188.5L475.1,185.6L475.6,183.1M479.5,175.6L482.5,176.1M495.1,192.6L498.7,193.9L500.5,194.7L505.3,198.2L515.1,199.8L514.0,202.5L509.7,202.1L505.3,204.8L501.0,204.1M505.3,198.2L500.7,201.8M498.4,208.2L499.7,209.7L505.3,211.9L509.2,210.8L511.5,210.1L515.8,204.1L520.9,205.2L525.3,202.9L529.4,213.4L533.2,214.5M515.1,199.8L518.4,194.7L517.6,190.2L517.6,185.6L518.4,179.6L515.6,177.9L507.9,177.9M515.1,199.8L514.0,202.5M517.6,190.2L521.2,188.5L527.6,189.8L535.3,191.0L538.6,187.7L545.3,188.9L548.3,194.7L554.5,196.7L559.6,197.8L558.8,204.8L555.0,207.5M535.3,191.0L535.5,188.5L538.6,187.7M538.6,187.7L540.9,182.2L537.1,177.0L536.3,172.5L529.4,169.8L525.3,172.0L525.8,175.6L522.5,178.3L518.4,179.6M515.6,177.9L515.6,175.2L511.7,173.9M511.0,170.2L520.9,168.8L525.3,172.0M529.4,169.8L528.1,164.2L527.1,163.7L522.7,161.8L519.7,161.8M527.1,163.7L528.4,156.4L529.4,154.4M528.4,148.2L532.7,143.5L538.1,135.8L534.0,131.2L535.5,124.1L531.7,111.6L534.0,106.3L530.2,102.9L531.4,96.5L536.0,91.4M519.2,118.6L517.6,109.0L517.1,104.9L509.9,96.5L512.5,95.1L523.0,95.1L523.8,92.2L528.9,89.2L531.4,96.5M485.6,156.4L487.4,152.4L488.9,145.6L488.2,142.4L488.4,135.2L494.3,121.7L494.3,116.7L499.2,107.6L503.5,100.8L508.7,101.5L509.9,96.5M492.3,213.0L496.4,213.4L499.7,209.7M505.3,211.9L505.8,215.6L506.9,215.6L507.4,218.8L506.4,220.6L504.6,224.1M492.0,213.4L496.1,213.8L497.6,214.5L497.6,215.9L500.7,220.6L504.6,224.1M497.6,214.5L500.7,214.5L505.8,215.6M506.9,226.2L508.7,223.7L509.9,226.2L509.7,228.9L511.0,229.9L510.2,232.6L508.4,233.6M508.7,223.7L513.0,224.8L514.5,224.8L515.8,221.6L514.5,218.8L515.3,217.0M515.3,217.0L515.8,219.5L522.2,220.2L526.3,218.5L530.4,219.9M514.5,224.8L515.8,228.2L518.6,227.5L522.0,228.6L524.8,226.8L528.9,225.8M524.8,226.8L524.0,230.2M511.0,229.9L515.8,228.2M525.3,202.9L529.1,208.6L529.4,213.4M525.3,202.9L532.0,204.1L534.0,210.1L534.5,213.4M533.2,214.5L529.4,213.4M528.9,226.8L524.8,226.8M563.4,227.5L568.6,228.9L571.9,233.6L569.8,234.6L570.6,239.5L571.9,241.8L565.7,242.1L559.6,243.1L551.2,243.1L549.9,246.2M563.4,227.5L568.6,228.9L572.4,228.2L576.2,226.2L576.0,228.9L572.4,228.2M559.6,220.2L569.3,223.7L576.2,226.2L579.8,228.6L581.6,226.5M568.6,228.9L572.4,228.6L576.0,233.9L576.2,236.2L582.4,237.9M571.9,233.6L576.2,236.2M571.9,241.8L573.4,245.6L575.0,248.4L573.9,251.9L575.5,254.3L579.8,258.6L579.3,261.3L581.6,264.2M565.7,242.1L562.9,244.3L562.2,250.6L556.5,253.7L551.4,257.0L548.8,255.8L548.3,254.0L550.9,251.2L549.1,245.9M556.5,253.7L557.6,257.7L551.9,259.5L554.5,262.4L553.2,263.9L549.6,266.3L546.8,265.7M557.6,257.7L560.6,258.3L565.0,260.7L571.6,266.3L576.2,266.6L579.3,268.3L581.1,268.3M576.2,266.6L579.8,263.9M545.0,260.4L546.5,265.4M548.3,254.0L548.1,256.7L548.1,259.5L546.8,265.7M590.3,294.9L599.8,292.2L598.5,284.8L591.9,284.2L589.3,280.6M599.8,292.2L598.0,292.2L590.3,294.9L582.6,296.0L577.5,300.6L569.8,299.3L567.8,301.1L566.8,301.9M590.3,294.9L593.1,301.1M598.5,284.8L600.6,281.2L601.6,278.6M582.4,237.9L595.2,241.5L601.1,238.9L609.0,240.8L613.9,243.7L612.1,251.2L613.4,259.5L615.4,259.8L613.1,264.5L617.2,265.7L619.2,272.1L614.9,277.8M613.1,264.5L626.9,264.2L627.2,261.3L634.6,258.3L635.1,254.6L637.2,253.7L639.2,250.9L640.5,244.3L648.2,242.4L648.9,241.8M613.9,243.7L622.3,244.6L627.4,241.1L630.8,241.8L635.1,240.5L640.5,243.4L641.0,237.9L648.9,241.8L646.1,237.2L645.9,234.3L639.0,234.6L638.2,231.9L644.1,229.9L648.7,230.9L656.9,229.2L662.5,225.8M595.2,241.5L595.2,225.5M600.6,228.2L600.6,215.2L607.2,213.0L613.6,218.1L615.9,220.6L623.3,219.9L626.4,222.3L626.2,225.8L631.3,229.2L634.1,227.9L638.7,224.8L639.5,223.0L645.4,224.4L647.4,221.6L662.5,225.1M600.6,228.2L603.4,228.2L607.2,223.0L610.8,225.1L611.1,227.9L615.7,228.9L627.4,241.1M630.8,241.8L632.3,238.5L629.7,235.3L638.2,231.9L634.6,229.9L639.0,231.9L644.1,229.9M577.3,217.0L576.8,205.6L580.6,204.8L578.3,202.9L576.2,202.5L577.8,199.4L577.0,195.1L581.6,196.7L587.2,189.4L593.9,190.2L599.8,193.9L607.2,192.2L614.9,192.2L613.9,193.0L610.8,193.0L614.6,193.0L611.1,192.6L614.4,181.8L631.8,175.2L638.4,173.9L639.5,179.2L645.1,180.0L653.8,178.3L656.6,182.6L662.3,193.0L670.7,192.2L675.6,197.8L680.7,199.4M662.5,225.1L664.0,221.6L663.0,216.7L668.7,213.8L669.7,207.1L676.1,207.5L676.6,202.5L680.7,199.4L682.0,199.4M682.0,199.4L693.2,193.4L706.3,197.4L708.8,194.3L710.4,187.7L718.8,191.0L719.1,193.9L730.4,195.1L735.2,199.0L746.7,197.8L756.0,197.1L758.8,198.2L764.1,209.0L757.7,209.3L753.1,213.8L743.7,214.9L742.4,217.7L743.7,219.9L738.8,223.7L726.0,227.2L715.2,223.4L704.0,223.4L701.4,217.7L696.6,215.2L689.9,214.5L687.6,204.4L682.0,199.4M758.8,198.2L764.4,185.2L766.7,182.6L773.6,181.8L779.8,185.6L783.9,197.1L791.8,200.6L792.6,205.2L802.3,202.5L797.9,214.9L793.1,215.9L793.3,220.9L791.5,224.4M791.5,224.4L789.2,224.4L785.1,225.8L782.1,226.5L775.7,232.6M781.6,239.8L785.9,237.2M648.9,241.8L651.5,245.6L656.4,247.2L659.2,250.9L658.7,256.4L660.0,256.4L658.9,260.1L664.8,263.3L662.3,267.5L666.9,270.1L675.3,273.5L682.7,274.4L682.7,270.1L684.5,269.8L684.8,271.8L687.1,273.5L692.7,273.2L693.0,270.4L701.2,266.6L704.5,268.9L706.3,269.2L706.3,270.1M664.8,263.3L667.6,263.6L676.6,268.9L682.7,270.1M684.5,269.8L692.0,270.4L693.0,270.4M656.4,247.2L653.8,249.7L647.7,249.4L646.4,251.9L647.9,255.5L650.0,257.0L647.7,261.0L646.4,263.9L641.3,270.1L637.4,269.8L635.4,272.1L636.9,276.4L639.2,280.1L633.3,280.3L631.8,282.0M682.7,274.4L684.8,277.5L683.0,278.6L684.3,280.3L684.8,283.4L685.0,287.0M684.8,275.0L687.1,275.5L687.1,277.5L693.7,278.4L693.0,280.1L690.7,282.3L691.7,284.2L693.5,282.0L694.3,288.7L693.5,290.3M706.3,269.2L709.9,270.9L709.9,275.8L707.1,278.9L706.8,281.5L710.4,283.4L711.2,286.5L713.7,288.1L716.3,287.8L717.8,288.9M694.3,288.7L695.8,286.2L696.0,281.2L699.6,277.0L700.9,273.5L705.8,272.4L706.3,269.2M717.8,288.9L717.6,285.4L718.8,285.6L720.9,285.4L724.5,284.5L726.8,283.1L730.4,284.5L730.1,286.7L733.7,288.1M713.7,288.1L713.5,291.4L708.1,292.8L706.5,296.3L710.4,301.9L708.6,305.1L711.2,309.1L712.2,314.1L710.1,318.2L709.6,319.0M713.5,291.4L714.7,293.6L716.5,293.3L716.0,299.0L718.6,297.1L721.9,296.6L725.2,299.0L725.5,301.9L727.5,304.1L726.5,307.5L720.9,307.8L719.1,309.4L720.6,314.3M717.8,288.9L718.6,285.6M718.8,285.6L720.6,287.6L725.0,291.1L723.2,294.1L726.5,296.0L730.4,301.9L732.4,305.1L732.4,306.4L726.5,307.5M732.4,306.4L732.7,309.6L728.3,314.6L728.6,316.2L724.5,317.7M713.5,328.1L716.0,329.9L718.6,328.6M737.8,339.4L740.3,342.2L743.7,341.9L746.2,340.7L750.6,340.9L753.9,333.2L758.3,333.7M818.2,351.2L818.2,362.2L818.2,367.9M774.9,368.7L777.5,367.6L777.2,369.2"/><path fill="#d4dadc" d="M221.4,209.0L225.5,207.9L229.4,204.1L231.2,201.0L235.8,201.0L239.6,204.1L240.6,208.2L239.6,209.7L234.5,209.7L231.4,207.1L228.1,208.6L224.2,208.6ZM232.4,226.5L235.0,226.8L236.5,222.3L236.0,217.0L238.3,214.5L239.6,212.3L237.0,211.9L234.5,213.0L232.2,217.0L231.9,215.2L232.9,220.6ZM240.9,211.6L243.4,214.1L244.0,218.8L246.0,222.0L248.0,220.6L249.1,215.9L252.4,216.7L251.9,213.8L248.6,211.6L244.7,210.8ZM243.7,226.5L247.3,227.5L251.1,226.2L255.2,223.0L252.4,223.4L248.6,224.1L246.0,225.8ZM252.9,221.3L257.5,221.3L261.9,220.6L261.9,218.1L257.5,219.2L254.2,219.9ZM141.0,122.3L146.2,123.5L149.2,119.9L154.4,121.1L155.1,115.5L151.3,111.6L148.0,115.5L143.6,114.8L140.5,118.0ZM158.2,146.1L162.8,146.7L166.1,145.1L171.0,141.3L176.1,137.5L174.3,136.3L168.4,140.2L164.6,139.1L160.8,141.9L158.2,144.5ZM204.5,180.5L207.6,181.8L210.2,192.2L209.4,194.7L208.1,190.2L205.0,184.8L203.2,183.1ZM172.3,157.9L178.2,156.4L185.8,155.4L185.8,153.9L178.2,153.4L173.0,155.9ZM193.5,168.8L197.4,168.4L196.6,161.3L194.3,162.2ZM199.9,188.1L202.5,190.2L203.2,186.0L200.4,183.9ZM229.4,198.6L231.9,198.2L231.2,195.5L229.4,196.3ZM237.3,313.8L239.6,316.2L240.1,315.4L238.3,313.3ZM278.0,384.4L281.1,387.3L279.8,387.1L277.7,385.2ZM273.1,317.5L274.9,318.0L275.2,320.6L273.1,320.6ZM528.9,226.2L529.4,227.5L531.7,228.4L537.6,228.6L542.4,225.8L547.3,225.8L550.1,228.2L553.2,229.1L558.8,229.2L563.7,227.2L564.0,225.5L562.2,222.3L558.8,220.6L557.3,218.5L554.0,216.3L551.2,214.5L552.9,213.8L554.5,211.6L555.2,209.0L557.8,207.5L553.2,207.5L551.4,209.0L547.6,210.5L546.3,211.2L548.1,214.1L550.4,213.8L550.6,214.9L547.8,215.2L544.8,217.4L543.0,216.7L540.4,213.8L543.2,211.6L539.1,210.8L537.8,209.3L535.8,209.7L533.5,213.4L533.2,214.5L530.7,218.1L528.6,221.6L527.6,224.1ZM526.3,230.6L527.6,229.2L531.2,229.2L533.5,230.1L531.4,231.3L528.1,231.4ZM582.6,209.7L578.8,213.4L577.0,217.0L578.8,220.6L578.8,223.0L581.4,226.2L583.4,229.9L586.0,231.6L583.7,234.6L582.4,237.6L582.6,240.5L586.0,242.1L589.0,243.4L594.2,243.1L595.4,240.8L594.9,235.9L592.9,234.3L592.9,230.9L592.4,228.2L596.2,228.2L596.7,226.2L592.9,225.8L591.3,223.0L588.3,221.3L587.2,217.7L589.0,216.7L592.9,214.5L592.9,209.3L590.3,207.9L586.5,208.2ZM611.3,209.0L614.6,209.0L613.9,210.5L612.1,210.8ZM606.4,212.3L607.7,211.9L607.7,215.9L606.4,216.7ZM722.9,189.8L727.3,189.8L733.7,183.9L738.0,175.2L738.5,171.6L736.2,172.5L734.4,178.3L731.1,183.1L726.8,187.3L724.0,188.9ZM645.9,213.8L648.4,210.1L651.8,209.0L658.9,209.3L658.2,210.5L651.8,210.5L648.9,213.0L647.2,215.2ZM536.3,151.3L540.4,149.8L541.7,146.1L537.8,142.4L534.5,145.1L535.3,149.8ZM545.5,146.1L549.4,146.1L550.1,141.9L547.6,136.3L546.3,139.1ZM489.2,158.8L492.5,158.4L492.5,155.4L490.5,154.9ZM493.6,162.2L494.6,161.3L495.3,158.4L494.3,158.8ZM526.8,160.8L528.4,158.4L527.6,156.4L526.3,157.9ZM538.6,346.8L540.4,344.0L544.2,343.7L546.0,345.8L544.0,348.3L543.0,351.2L540.4,351.7L538.6,349.6ZM532.0,353.2L533.2,353.5L534.0,358.6L536.8,366.1L535.5,366.6L532.7,361.2L531.7,356.0ZM544.0,368.9L545.5,369.5L546.8,375.4L547.3,380.7L545.8,381.5L545.0,375.4L544.2,371.5ZM548.8,333.0L550.1,333.5L551.2,338.1L549.9,337.8ZM491.8,309.9L494.3,309.6L493.8,311.7L492.3,311.5ZM535.0,341.4L537.3,338.9L537.6,339.9L536.0,341.9ZM572.4,238.5L573.9,238.2L574.4,241.1L573.2,241.8ZM565.7,237.2L568.6,235.9L568.8,237.6L566.5,238.2ZM652.5,224.4L657.4,223.0L657.4,224.4L654.3,225.5ZM795.1,216.7L797.2,214.1L797.4,216.7ZM710.6,52.0L720.9,50.0L728.6,51.0L718.3,53.9ZM712.2,242.4L715.0,241.8L714.5,243.7ZM722.7,310.1L724.7,312.2L724.0,312.5L722.4,310.9Z"/><path d="M226.8,0V469" stroke="rgba(238,240,240,.22)" stroke-width="1"/><path d="M457.2,0V469" stroke="rgba(238,240,240,.22)" stroke-width="1"/><path d="M687.6,0V469" stroke="rgba(238,240,240,.22)" stroke-width="1"/><path d="M918.0,0V469" stroke="rgba(238,240,240,.22)" stroke-width="1"/><path d="M0,114.1H1034" stroke="rgba(238,240,240,.22)" stroke-width="1"/><path d="M0,344.5H1034" stroke="rgba(238,240,240,.22)" stroke-width="1"/></svg>
<div class="zoom"><span>+</span><span>−</span></div>
<div class="lbl" style="left:211.0px;top:198.2px;letter-spacing:0.59px;margin-left:0.33px">NORTH</div>
<div class="lbl" style="left:211.0px;top:213.6px;letter-spacing:0.59px;margin-left:0.33px">AMERICA</div>
<div class="lbl" style="left:482.9px;top:216.0px;letter-spacing:0.39px;margin-left:0.22px">EUROPE</div>
<div class="lbl" style="left:252.8px;top:322.0px;letter-spacing:0.56px;margin-left:0.32px">AMÉRICA</div>
<div class="lbl" style="left:301.4px;top:386.0px;letter-spacing:0.46px;margin-left:0.26px">AMÉRICA</div>
<div class="lbl" style="left:301.0px;top:401.3px;letter-spacing:0.28px;margin-left:0.16px">DO SUL;AMÉRICA</div>
<div class="lbl" style="left:301.7px;top:416.0px;letter-spacing:0.17px;margin-left:0.09px">DEL SUR</div>
<div class="lbl" style="left:503.0px;top:309.3px;letter-spacing:0.52px;margin-left:0.29px">AFRIKA /</div>
<div class="lbl" style="left:807.3px;top:411.8px;letter-spacing:0.26px;margin-left:0.15px">AUSTRALIA</div>
<div class="lbl" style="left:902.1px;top:400.8px;letter-spacing:0.59px;margin-left:0.33px">OCEANIA</div>
<div class="lbl" style="left:7.300px;top:400.800px">A</div>
<div class="lbl cjk" style="left:685.700px;top:192.500px">亚洲</div>
<div class="lbl ar" style="left:502.500px;top:322.800px">أفريقيا</div>

<div class="mk" style="left:504.0px;top:139.0px">3</div>
<div class="mk" style="left:458.4px;top:174.0px">3</div>
<div class="mk" style="left:492.8px;top:170.7px">4</div>
<div class="mk" style="left:268.4px;top:214.4px">6</div>
<div class="mk" style="left:724.500px;top:325.600px">4</div>
<div class="attr"><svg width="11.100" height="6.800" viewBox="0 0 12 8" preserveAspectRatio="none"><rect width="12" height="4" fill="#4C7BE1"/><rect y="4" width="12" height="4" fill="#FFD500"/></svg><a>Leaflet</a> | © <a>OpenStreetMap</a> contributors © <a>CARTO</a></div>
</div>
</body>
</html>
